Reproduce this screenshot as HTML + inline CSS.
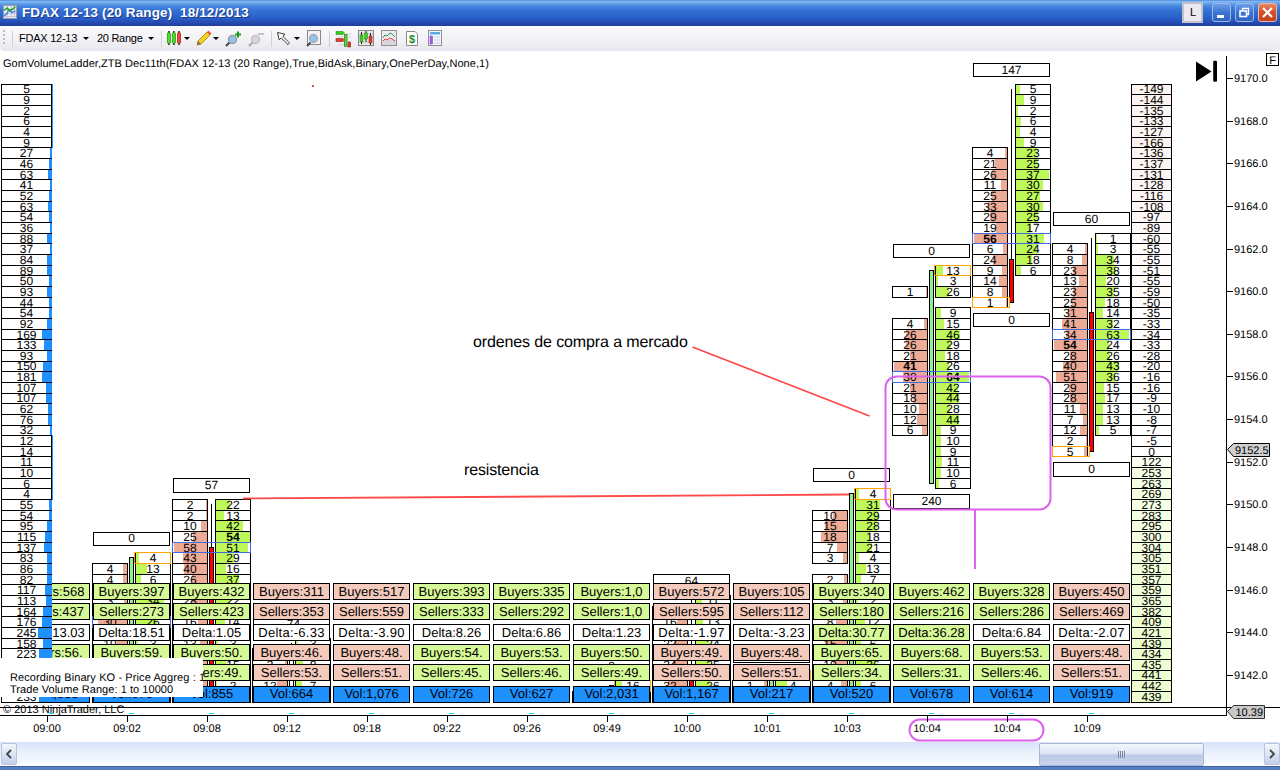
<!DOCTYPE html>
<html><head><meta charset="utf-8"><title>FDAX 12-13 (20 Range) 18/12/2013</title>
<style>
html,body{margin:0;padding:0;background:#fff;overflow:hidden}
body{width:1280px;height:770px;position:relative;font-family:"Liberation Sans", Arial, sans-serif;}
#chart{position:absolute;left:0;top:0}
#title{position:absolute;left:0;top:0;width:1280px;height:26px;
 background:linear-gradient(#3A6FDA 0px,#86BDF0 1px,#6AA8EA 3px,#4687DF 6px,#3270D4 11px,#2B62CA 17px,#2752BC 21px,#2344A6 24px,#213E9C 26px);}
#title .t{position:absolute;left:22px;top:5px;color:#fff;font-weight:bold;font-size:13.5px;letter-spacing:0.12px;white-space:pre;text-shadow:1px 1px 0 #1c3a8a}
#tb{position:absolute;left:0;top:26px;width:1280px;height:25px;background:linear-gradient(#FAFAFC,#F1F1F5 60%,#E6E6EC);border-radius:0 0 4px 4px}
#tb .x{position:absolute;top:6px;font-size:11px;color:#000;white-space:pre}
.arr{position:absolute;width:0;height:0;border-left:3px solid transparent;border-right:3px solid transparent;border-top:3px solid #000}
.sep{position:absolute;top:31px;width:1px;height:16px;background:#D0D0D8}
.wb{position:absolute;top:3px;width:19px;height:19px;border-radius:3px;border:1px solid #9DB9EB;box-sizing:border-box}
#sb{position:absolute;left:0;top:742px;width:1280px;height:24px;background:linear-gradient(#D8E3F9,#ECF1FD 50%,#FBFCFF)}
#bot{position:absolute;left:0;top:766px;width:1280px;height:4px;background:linear-gradient(#2F4F8F,#5B84C4 40%,#4F78BC)}
.sbtn{position:absolute;top:743px;width:16px;height:22px;box-sizing:border-box;border:1px solid #B8C4DC;border-radius:2px;background:linear-gradient(#F3F6FC,#DCE4F4 50%,#C4D0E8)}
#thumb{position:absolute;left:1039px;top:743px;width:165px;height:23px;box-sizing:border-box;border:1px solid #A8B8D8;border-radius:2px;background:linear-gradient(#F4F7FD,#DDE5F5 45%,#BCCAE6 55%,#C9D5EC)}
</style></head><body>
<svg id="chart" width="1280" height="770" viewBox="0 0 1280 770" font-family='"Liberation Sans", Arial, sans-serif' shape-rendering="crispEdges" text-rendering="geometricPrecision">
<rect x="0" y="51" width="1280" height="691" fill="#fff"/>
<rect x="93.5" y="532.5" width="76" height="13" fill="#fff" stroke="#000" stroke-width="1" />
<text x="131.5" y="542.47" font-size="12" text-anchor="middle" fill="#000" >0</text>
<rect x="135" y="552" width="36" height="12" fill="#fff"/>
<rect x="136" y="553" width="3" height="10" fill="#BDF859"/>
<rect x="135.5" y="552.5" width="35" height="11" fill="none" stroke="#000" stroke-width="1" />
<text x="153.0" y="562.27" font-size="12" text-anchor="middle" fill="#000" >4</text>
<rect x="92" y="563" width="36" height="12" fill="#fff"/>
<rect x="123" y="564" width="4" height="10" fill="#EDAB95"/>
<rect x="92.5" y="563.5" width="35" height="11" fill="none" stroke="#000" stroke-width="1" />
<text x="110.0" y="572.92" font-size="12" text-anchor="middle" fill="#000" >4</text>
<rect x="135" y="563" width="36" height="12" fill="#fff"/>
<rect x="136" y="564" width="11" height="10" fill="#BDF859"/>
<rect x="135.5" y="563.5" width="35" height="11" fill="none" stroke="#000" stroke-width="1" />
<text x="153.0" y="572.92" font-size="12" text-anchor="middle" fill="#000" >13</text>
<rect x="92" y="574" width="36" height="11" fill="#fff"/>
<rect x="123" y="575" width="4" height="9" fill="#EDAB95"/>
<rect x="92.5" y="574.5" width="35" height="10" fill="none" stroke="#000" stroke-width="1" />
<text x="110.0" y="583.58" font-size="12" text-anchor="middle" fill="#000" >4</text>
<rect x="135" y="574" width="36" height="11" fill="#fff"/>
<rect x="136" y="575" width="5" height="9" fill="#BDF859"/>
<rect x="135.5" y="574.5" width="35" height="10" fill="none" stroke="#000" stroke-width="1" />
<text x="153.0" y="583.58" font-size="12" text-anchor="middle" fill="#000" >6</text>
<rect x="92" y="584" width="36" height="12" fill="#fff"/>
<rect x="121" y="585" width="6" height="10" fill="#EDAB95"/>
<rect x="92.5" y="584.5" width="35" height="11" fill="none" stroke="#000" stroke-width="1" />
<text x="110.0" y="594.23" font-size="12" text-anchor="middle" fill="#000" >6</text>
<rect x="135" y="584" width="36" height="12" fill="#fff"/>
<rect x="136" y="585" width="17" height="10" fill="#BDF859"/>
<rect x="135.5" y="584.5" width="35" height="11" fill="none" stroke="#000" stroke-width="1" />
<text x="153.0" y="594.23" font-size="12" text-anchor="middle" fill="#000" >21</text>
<rect x="92" y="595" width="36" height="12" fill="#fff"/>
<rect x="124" y="596" width="3" height="10" fill="#EDAB95"/>
<rect x="92.5" y="595.5" width="35" height="11" fill="none" stroke="#000" stroke-width="1" />
<text x="110.0" y="604.89" font-size="12" text-anchor="middle" fill="#000" >3</text>
<rect x="135" y="595" width="36" height="12" fill="#fff"/>
<rect x="136" y="596" width="28" height="10" fill="#BDF859"/>
<rect x="135.5" y="595.5" width="35" height="11" fill="none" stroke="#000" stroke-width="1" />
<text x="153.0" y="604.89" font-size="12" text-anchor="middle" fill="#000" >34</text>
<rect x="92" y="606" width="36" height="11" fill="#fff"/>
<rect x="110" y="607" width="17" height="9" fill="#EDAB95"/>
<rect x="92.5" y="606.5" width="35" height="10" fill="none" stroke="#000" stroke-width="1" />
<text x="110.0" y="615.54" font-size="12" text-anchor="middle" fill="#000" >18</text>
<rect x="135" y="606" width="36" height="11" fill="#fff"/>
<rect x="136" y="607" width="21" height="9" fill="#BDF859"/>
<rect x="135.5" y="606.5" width="35" height="10" fill="none" stroke="#000" stroke-width="1" />
<text x="153.0" y="615.54" font-size="12" text-anchor="middle" fill="#000" >25</text>
<rect x="92" y="616" width="36" height="12" fill="#fff"/>
<rect x="98" y="617" width="29" height="10" fill="#EDAB95"/>
<rect x="92.5" y="616.5" width="35" height="11" fill="none" stroke="#000" stroke-width="1" />
<text x="110.0" y="626.2" font-size="12" text-anchor="middle" fill="#000" >30</text>
<rect x="135" y="616" width="36" height="12" fill="#fff"/>
<rect x="136" y="617" width="21" height="10" fill="#BDF859"/>
<rect x="135.5" y="616.5" width="35" height="11" fill="none" stroke="#000" stroke-width="1" />
<text x="153.0" y="626.2" font-size="12" text-anchor="middle" fill="#000" >26</text>
<rect x="92" y="627" width="36" height="12" fill="#fff"/>
<rect x="107" y="628" width="20" height="10" fill="#EDAB95"/>
<rect x="92.5" y="627.5" width="35" height="11" fill="none" stroke="#000" stroke-width="1" />
<text x="110.0" y="636.85" font-size="12" text-anchor="middle" fill="#000" >21</text>
<rect x="135" y="627" width="36" height="12" fill="#fff"/>
<rect x="136" y="628" width="14" height="10" fill="#BDF859"/>
<rect x="135.5" y="627.5" width="35" height="11" fill="none" stroke="#000" stroke-width="1" />
<text x="153.0" y="636.85" font-size="12" text-anchor="middle" fill="#000" >17</text>
<rect x="92" y="638" width="36" height="11" fill="#fff"/>
<rect x="117" y="639" width="10" height="9" fill="#EDAB95"/>
<rect x="92.5" y="638.5" width="35" height="10" fill="none" stroke="#000" stroke-width="1" />
<text x="110.0" y="647.51" font-size="12" text-anchor="middle" fill="#000" >10</text>
<rect x="135" y="638" width="36" height="11" fill="#fff"/>
<rect x="136" y="639" width="2" height="9" fill="#BDF859"/>
<rect x="135.5" y="638.5" width="35" height="10" fill="none" stroke="#000" stroke-width="1" />
<text x="153.0" y="647.51" font-size="12" text-anchor="middle" fill="#000" >3</text>
<rect x="92" y="648" width="36" height="12" fill="#fff"/>
<rect x="119" y="649" width="8" height="10" fill="#EDAB95"/>
<rect x="92.5" y="648.5" width="35" height="11" fill="none" stroke="#000" stroke-width="1" />
<text x="110.0" y="658.16" font-size="12" text-anchor="middle" fill="#000" >8</text>
<rect x="135" y="648" width="36" height="12" fill="#fff"/>
<rect x="136" y="649" width="10" height="10" fill="#BDF859"/>
<rect x="135.5" y="648.5" width="35" height="11" fill="none" stroke="#000" stroke-width="1" />
<text x="153.0" y="658.16" font-size="12" text-anchor="middle" fill="#000" >12</text>
<rect x="92" y="659" width="36" height="12" fill="#fff"/>
<rect x="113" y="660" width="14" height="10" fill="#EDAB95"/>
<rect x="92.5" y="659.5" width="35" height="11" fill="none" stroke="#000" stroke-width="1" />
<text x="110.0" y="668.82" font-size="12" text-anchor="middle" fill="#000" >14</text>
<rect x="135" y="659" width="36" height="12" fill="#fff"/>
<rect x="136" y="660" width="7" height="10" fill="#BDF859"/>
<rect x="135.5" y="659.5" width="35" height="11" fill="none" stroke="#000" stroke-width="1" />
<text x="153.0" y="668.82" font-size="12" text-anchor="middle" fill="#000" >9</text>
<rect x="92" y="670" width="36" height="11" fill="#fff"/>
<rect x="116" y="671" width="11" height="9" fill="#EDAB95"/>
<rect x="92.5" y="670.5" width="35" height="10" fill="none" stroke="#000" stroke-width="1" />
<text x="110.0" y="679.47" font-size="12" text-anchor="middle" fill="#000" >11</text>
<rect x="135" y="670" width="36" height="11" fill="#fff"/>
<rect x="136" y="671" width="5" height="9" fill="#BDF859"/>
<rect x="135.5" y="670.5" width="35" height="10" fill="none" stroke="#000" stroke-width="1" />
<text x="153.0" y="679.47" font-size="12" text-anchor="middle" fill="#000" >6</text>
<rect x="92" y="680" width="36" height="12" fill="#fff"/>
<rect x="118" y="681" width="9" height="10" fill="#EDAB95"/>
<rect x="92.5" y="680.5" width="35" height="11" fill="none" stroke="#000" stroke-width="1" />
<text x="110.0" y="690.13" font-size="12" text-anchor="middle" fill="#000" >9</text>
<rect x="135" y="680" width="36" height="12" fill="#fff"/>
<rect x="136" y="681" width="2" height="10" fill="#BDF859"/>
<rect x="135.5" y="680.5" width="35" height="11" fill="none" stroke="#000" stroke-width="1" />
<text x="153.0" y="690.13" font-size="12" text-anchor="middle" fill="#000" >2</text>
<rect x="92" y="691" width="36" height="12" fill="#fff"/>
<rect x="122" y="692" width="5" height="10" fill="#EDAB95"/>
<rect x="92.5" y="691.5" width="35" height="11" fill="none" stroke="#000" stroke-width="1" />
<text x="110.0" y="700.78" font-size="12" text-anchor="middle" fill="#000" >5</text>
<rect x="135" y="691" width="36" height="12" fill="#fff"/>
<rect x="136" y="692" width="2" height="10" fill="#BDF859"/>
<rect x="135.5" y="691.5" width="35" height="11" fill="none" stroke="#000" stroke-width="1" />
<text x="153.0" y="700.78" font-size="12" text-anchor="middle" fill="#000" >3</text>
<rect x="129.5" y="557.5" width="4" height="143" fill="#90EE90" stroke="#000" stroke-width="1" />
<rect x="92.5" y="616.5" width="78" height="11" fill="none" stroke="#4169E1" stroke-width="1.4" />
<rect x="134.5" y="552.5" width="36" height="11" fill="none" stroke="#FFA500" stroke-width="1.2" />
<rect x="173.5" y="478.5" width="76" height="14" fill="#fff" stroke="#000" stroke-width="1" />
<text x="211.5" y="489.19" font-size="12" text-anchor="middle" fill="#000" >57</text>
<rect x="211" y="504" width="1" height="43" fill="#000"/>
<rect x="172" y="499" width="36" height="12" fill="#fff"/>
<rect x="206" y="500" width="1" height="10" fill="#EDAB95"/>
<rect x="172.5" y="499.5" width="35" height="11" fill="none" stroke="#000" stroke-width="1" />
<text x="190.0" y="508.99" font-size="12" text-anchor="middle" fill="#000" >2</text>
<rect x="215" y="499" width="36" height="12" fill="#fff"/>
<rect x="216" y="500" width="14" height="10" fill="#BDF859"/>
<rect x="215.5" y="499.5" width="35" height="11" fill="none" stroke="#000" stroke-width="1" />
<text x="233.0" y="508.99" font-size="12" text-anchor="middle" fill="#000" >22</text>
<rect x="172" y="510" width="36" height="11" fill="#fff"/>
<rect x="206" y="511" width="1" height="9" fill="#EDAB95"/>
<rect x="172.5" y="510.5" width="35" height="10" fill="none" stroke="#000" stroke-width="1" />
<text x="190.0" y="519.65" font-size="12" text-anchor="middle" fill="#000" >2</text>
<rect x="215" y="510" width="36" height="11" fill="#fff"/>
<rect x="216" y="511" width="8" height="9" fill="#BDF859"/>
<rect x="215.5" y="510.5" width="35" height="10" fill="none" stroke="#000" stroke-width="1" />
<text x="233.0" y="519.65" font-size="12" text-anchor="middle" fill="#000" >13</text>
<rect x="172" y="520" width="36" height="12" fill="#fff"/>
<rect x="201" y="521" width="6" height="10" fill="#EDAB95"/>
<rect x="172.5" y="520.5" width="35" height="11" fill="none" stroke="#000" stroke-width="1" />
<text x="190.0" y="530.3" font-size="12" text-anchor="middle" fill="#000" >10</text>
<rect x="215" y="520" width="36" height="12" fill="#fff"/>
<rect x="216" y="521" width="27" height="10" fill="#BDF859"/>
<rect x="215.5" y="520.5" width="35" height="11" fill="none" stroke="#000" stroke-width="1" />
<text x="233.0" y="530.3" font-size="12" text-anchor="middle" fill="#000" >42</text>
<rect x="172" y="531" width="36" height="12" fill="#fff"/>
<rect x="193" y="532" width="14" height="10" fill="#EDAB95"/>
<rect x="172.5" y="531.5" width="35" height="11" fill="none" stroke="#000" stroke-width="1" />
<text x="190.0" y="540.96" font-size="12" text-anchor="middle" fill="#000" >25</text>
<rect x="215" y="531" width="36" height="12" fill="#fff"/>
<rect x="216" y="532" width="34" height="10" fill="#BDF859"/>
<rect x="215.5" y="531.5" width="35" height="11" fill="none" stroke="#000" stroke-width="1" />
<text x="233.0" y="540.96" font-size="12" text-anchor="middle" font-weight="bold" fill="#000" >54</text>
<rect x="172" y="542" width="36" height="11" fill="#fff"/>
<rect x="174" y="543" width="33" height="9" fill="#EDAB95"/>
<rect x="172.5" y="542.5" width="35" height="10" fill="none" stroke="#000" stroke-width="1" />
<text x="190.0" y="551.61" font-size="12" text-anchor="middle" fill="#000" >58</text>
<rect x="215" y="542" width="36" height="11" fill="#fff"/>
<rect x="216" y="543" width="32" height="9" fill="#BDF859"/>
<rect x="215.5" y="542.5" width="35" height="10" fill="none" stroke="#000" stroke-width="1" />
<text x="233.0" y="551.61" font-size="12" text-anchor="middle" fill="#000" >51</text>
<rect x="172" y="552" width="36" height="12" fill="#fff"/>
<rect x="183" y="553" width="24" height="10" fill="#EDAB95"/>
<rect x="172.5" y="552.5" width="35" height="11" fill="none" stroke="#000" stroke-width="1" />
<text x="190.0" y="562.27" font-size="12" text-anchor="middle" fill="#000" >43</text>
<rect x="215" y="552" width="36" height="12" fill="#fff"/>
<rect x="216" y="553" width="18" height="10" fill="#BDF859"/>
<rect x="215.5" y="552.5" width="35" height="11" fill="none" stroke="#000" stroke-width="1" />
<text x="233.0" y="562.27" font-size="12" text-anchor="middle" fill="#000" >29</text>
<rect x="172" y="563" width="36" height="12" fill="#fff"/>
<rect x="184" y="564" width="23" height="10" fill="#EDAB95"/>
<rect x="172.5" y="563.5" width="35" height="11" fill="none" stroke="#000" stroke-width="1" />
<text x="190.0" y="572.92" font-size="12" text-anchor="middle" fill="#000" >40</text>
<rect x="215" y="563" width="36" height="12" fill="#fff"/>
<rect x="216" y="564" width="10" height="10" fill="#BDF859"/>
<rect x="215.5" y="563.5" width="35" height="11" fill="none" stroke="#000" stroke-width="1" />
<text x="233.0" y="572.92" font-size="12" text-anchor="middle" fill="#000" >16</text>
<rect x="172" y="574" width="36" height="11" fill="#fff"/>
<rect x="192" y="575" width="15" height="9" fill="#EDAB95"/>
<rect x="172.5" y="574.5" width="35" height="10" fill="none" stroke="#000" stroke-width="1" />
<text x="190.0" y="583.58" font-size="12" text-anchor="middle" fill="#000" >26</text>
<rect x="215" y="574" width="36" height="11" fill="#fff"/>
<rect x="216" y="575" width="23" height="9" fill="#BDF859"/>
<rect x="215.5" y="574.5" width="35" height="10" fill="none" stroke="#000" stroke-width="1" />
<text x="233.0" y="583.58" font-size="12" text-anchor="middle" fill="#000" >37</text>
<rect x="172" y="584" width="36" height="12" fill="#fff"/>
<rect x="188" y="585" width="19" height="10" fill="#EDAB95"/>
<rect x="172.5" y="584.5" width="35" height="11" fill="none" stroke="#000" stroke-width="1" />
<text x="190.0" y="594.23" font-size="12" text-anchor="middle" fill="#000" >33</text>
<rect x="215" y="584" width="36" height="12" fill="#fff"/>
<rect x="216" y="585" width="19" height="10" fill="#BDF859"/>
<rect x="215.5" y="584.5" width="35" height="11" fill="none" stroke="#000" stroke-width="1" />
<text x="233.0" y="594.23" font-size="12" text-anchor="middle" fill="#000" >30</text>
<rect x="172" y="595" width="36" height="12" fill="#fff"/>
<rect x="191" y="596" width="16" height="10" fill="#EDAB95"/>
<rect x="172.5" y="595.5" width="35" height="11" fill="none" stroke="#000" stroke-width="1" />
<text x="190.0" y="604.89" font-size="12" text-anchor="middle" fill="#000" >28</text>
<rect x="215" y="595" width="36" height="12" fill="#fff"/>
<rect x="216" y="596" width="14" height="10" fill="#BDF859"/>
<rect x="215.5" y="595.5" width="35" height="11" fill="none" stroke="#000" stroke-width="1" />
<text x="233.0" y="604.89" font-size="12" text-anchor="middle" fill="#000" >22</text>
<rect x="172" y="606" width="36" height="11" fill="#fff"/>
<rect x="195" y="607" width="12" height="9" fill="#EDAB95"/>
<rect x="172.5" y="606.5" width="35" height="10" fill="none" stroke="#000" stroke-width="1" />
<text x="190.0" y="615.54" font-size="12" text-anchor="middle" fill="#000" >21</text>
<rect x="215" y="606" width="36" height="11" fill="#fff"/>
<rect x="216" y="607" width="11" height="9" fill="#BDF859"/>
<rect x="215.5" y="606.5" width="35" height="10" fill="none" stroke="#000" stroke-width="1" />
<text x="233.0" y="615.54" font-size="12" text-anchor="middle" fill="#000" >18</text>
<rect x="172" y="616" width="36" height="12" fill="#fff"/>
<rect x="198" y="617" width="9" height="10" fill="#EDAB95"/>
<rect x="172.5" y="616.5" width="35" height="11" fill="none" stroke="#000" stroke-width="1" />
<text x="190.0" y="626.2" font-size="12" text-anchor="middle" fill="#000" >16</text>
<rect x="215" y="616" width="36" height="12" fill="#fff"/>
<rect x="216" y="617" width="9" height="10" fill="#BDF859"/>
<rect x="215.5" y="616.5" width="35" height="11" fill="none" stroke="#000" stroke-width="1" />
<text x="233.0" y="626.2" font-size="12" text-anchor="middle" fill="#000" >14</text>
<rect x="172" y="627" width="36" height="12" fill="#fff"/>
<rect x="196" y="628" width="11" height="10" fill="#EDAB95"/>
<rect x="172.5" y="627.5" width="35" height="11" fill="none" stroke="#000" stroke-width="1" />
<text x="190.0" y="636.85" font-size="12" text-anchor="middle" fill="#000" >19</text>
<rect x="215" y="627" width="36" height="12" fill="#fff"/>
<rect x="216" y="628" width="7" height="10" fill="#BDF859"/>
<rect x="215.5" y="627.5" width="35" height="11" fill="none" stroke="#000" stroke-width="1" />
<text x="233.0" y="636.85" font-size="12" text-anchor="middle" fill="#000" >11</text>
<rect x="172" y="638" width="36" height="11" fill="#fff"/>
<rect x="200" y="639" width="7" height="9" fill="#EDAB95"/>
<rect x="172.5" y="638.5" width="35" height="10" fill="none" stroke="#000" stroke-width="1" />
<text x="190.0" y="647.51" font-size="12" text-anchor="middle" fill="#000" >13</text>
<rect x="215" y="638" width="36" height="11" fill="#fff"/>
<rect x="216" y="639" width="2" height="9" fill="#BDF859"/>
<rect x="215.5" y="638.5" width="35" height="10" fill="none" stroke="#000" stroke-width="1" />
<text x="233.0" y="647.51" font-size="12" text-anchor="middle" fill="#000" >3</text>
<rect x="172" y="648" width="36" height="12" fill="#fff"/>
<rect x="194" y="649" width="13" height="10" fill="#EDAB95"/>
<rect x="172.5" y="648.5" width="35" height="11" fill="none" stroke="#000" stroke-width="1" />
<text x="190.0" y="658.16" font-size="12" text-anchor="middle" fill="#000" >22</text>
<rect x="215" y="648" width="36" height="12" fill="#fff"/>
<rect x="216" y="649" width="6" height="10" fill="#BDF859"/>
<rect x="215.5" y="648.5" width="35" height="11" fill="none" stroke="#000" stroke-width="1" />
<text x="233.0" y="658.16" font-size="12" text-anchor="middle" fill="#000" >9</text>
<rect x="172" y="659" width="36" height="12" fill="#fff"/>
<rect x="191" y="660" width="16" height="10" fill="#EDAB95"/>
<rect x="172.5" y="659.5" width="35" height="11" fill="none" stroke="#000" stroke-width="1" />
<text x="190.0" y="668.82" font-size="12" text-anchor="middle" fill="#000" >28</text>
<rect x="215" y="659" width="36" height="12" fill="#fff"/>
<rect x="216" y="660" width="10" height="10" fill="#BDF859"/>
<rect x="215.5" y="659.5" width="35" height="11" fill="none" stroke="#000" stroke-width="1" />
<text x="233.0" y="668.82" font-size="12" text-anchor="middle" fill="#000" >15</text>
<rect x="172" y="670" width="36" height="11" fill="#fff"/>
<rect x="197" y="671" width="10" height="9" fill="#EDAB95"/>
<rect x="172.5" y="670.5" width="35" height="10" fill="none" stroke="#000" stroke-width="1" />
<text x="190.0" y="679.47" font-size="12" text-anchor="middle" fill="#000" >17</text>
<rect x="215" y="670" width="36" height="11" fill="#fff"/>
<rect x="216" y="671" width="5" height="9" fill="#BDF859"/>
<rect x="215.5" y="670.5" width="35" height="10" fill="none" stroke="#000" stroke-width="1" />
<text x="233.0" y="679.47" font-size="12" text-anchor="middle" fill="#000" >8</text>
<rect x="172" y="680" width="36" height="12" fill="#fff"/>
<rect x="189" y="681" width="18" height="10" fill="#EDAB95"/>
<rect x="172.5" y="680.5" width="35" height="11" fill="none" stroke="#000" stroke-width="1" />
<text x="190.0" y="690.13" font-size="12" text-anchor="middle" fill="#000" >31</text>
<rect x="215" y="680" width="36" height="12" fill="#fff"/>
<rect x="216" y="681" width="1" height="10" fill="#BDF859"/>
<rect x="215.5" y="680.5" width="35" height="11" fill="none" stroke="#000" stroke-width="1" />
<text x="233.0" y="690.13" font-size="12" text-anchor="middle" fill="#000" >2</text>
<rect x="172" y="691" width="36" height="12" fill="#fff"/>
<rect x="200" y="692" width="7" height="10" fill="#EDAB95"/>
<rect x="172.5" y="691.5" width="35" height="11" fill="none" stroke="#000" stroke-width="1" />
<text x="190.0" y="700.78" font-size="12" text-anchor="middle" fill="#000" >12</text>
<rect x="215" y="691" width="36" height="12" fill="#fff"/>
<rect x="216" y="692" width="3" height="10" fill="#BDF859"/>
<rect x="215.5" y="691.5" width="35" height="11" fill="none" stroke="#000" stroke-width="1" />
<text x="233.0" y="700.78" font-size="12" text-anchor="middle" fill="#000" >5</text>
<rect x="209.5" y="547.5" width="4" height="153" fill="#FF0000" stroke="#000" stroke-width="1" />
<rect x="172.5" y="542.5" width="78" height="10" fill="none" stroke="#4169E1" stroke-width="1.4" />
<rect x="253.5" y="617.5" width="76" height="13" fill="#fff" stroke="#000" stroke-width="1" />
<text x="291.5" y="627.71" font-size="12" text-anchor="middle" fill="#000" >-74</text>
<rect x="291" y="643" width="1" height="10" fill="#000"/>
<rect x="295" y="638" width="36" height="11" fill="#fff"/>
<rect x="296" y="639" width="2" height="9" fill="#BDF859"/>
<rect x="295.5" y="638.5" width="35" height="10" fill="none" stroke="#000" stroke-width="1" />
<text x="313.0" y="647.51" font-size="12" text-anchor="middle" fill="#000" >3</text>
<rect x="252" y="648" width="36" height="12" fill="#fff"/>
<rect x="285" y="649" width="2" height="10" fill="#EDAB95"/>
<rect x="252.5" y="648.5" width="35" height="11" fill="none" stroke="#000" stroke-width="1" />
<text x="270.0" y="658.16" font-size="12" text-anchor="middle" fill="#000" >2</text>
<rect x="295" y="648" width="36" height="12" fill="#fff"/>
<rect x="296" y="649" width="4" height="10" fill="#BDF859"/>
<rect x="295.5" y="648.5" width="35" height="11" fill="none" stroke="#000" stroke-width="1" />
<text x="313.0" y="658.16" font-size="12" text-anchor="middle" fill="#000" >5</text>
<rect x="252" y="659" width="36" height="12" fill="#fff"/>
<rect x="285" y="660" width="2" height="10" fill="#EDAB95"/>
<rect x="252.5" y="659.5" width="35" height="11" fill="none" stroke="#000" stroke-width="1" />
<text x="270.0" y="668.82" font-size="12" text-anchor="middle" fill="#000" >3</text>
<rect x="295" y="659" width="36" height="12" fill="#fff"/>
<rect x="296" y="660" width="7" height="10" fill="#BDF859"/>
<rect x="295.5" y="659.5" width="35" height="11" fill="none" stroke="#000" stroke-width="1" />
<text x="313.0" y="668.82" font-size="12" text-anchor="middle" fill="#000" >8</text>
<rect x="252" y="670" width="36" height="11" fill="#fff"/>
<rect x="280" y="671" width="7" height="9" fill="#EDAB95"/>
<rect x="252.5" y="670.5" width="35" height="10" fill="none" stroke="#000" stroke-width="1" />
<text x="270.0" y="679.47" font-size="12" text-anchor="middle" fill="#000" >9</text>
<rect x="295" y="670" width="36" height="11" fill="#fff"/>
<rect x="296" y="671" width="9" height="9" fill="#BDF859"/>
<rect x="295.5" y="670.5" width="35" height="10" fill="none" stroke="#000" stroke-width="1" />
<text x="313.0" y="679.47" font-size="12" text-anchor="middle" fill="#000" >11</text>
<rect x="252" y="680" width="36" height="12" fill="#fff"/>
<rect x="277" y="681" width="10" height="10" fill="#EDAB95"/>
<rect x="252.5" y="680.5" width="35" height="11" fill="none" stroke="#000" stroke-width="1" />
<text x="270.0" y="690.13" font-size="12" text-anchor="middle" fill="#000" >12</text>
<rect x="295" y="680" width="36" height="12" fill="#fff"/>
<rect x="296" y="681" width="6" height="10" fill="#BDF859"/>
<rect x="295.5" y="680.5" width="35" height="11" fill="none" stroke="#000" stroke-width="1" />
<text x="313.0" y="690.13" font-size="12" text-anchor="middle" fill="#000" >7</text>
<rect x="252" y="691" width="36" height="12" fill="#fff"/>
<rect x="275" y="692" width="12" height="10" fill="#EDAB95"/>
<rect x="252.5" y="691.5" width="35" height="11" fill="none" stroke="#000" stroke-width="1" />
<text x="270.0" y="700.78" font-size="12" text-anchor="middle" fill="#000" >15</text>
<rect x="295" y="691" width="36" height="12" fill="#fff"/>
<rect x="296" y="692" width="7" height="10" fill="#BDF859"/>
<rect x="295.5" y="691.5" width="35" height="11" fill="none" stroke="#000" stroke-width="1" />
<text x="313.0" y="700.78" font-size="12" text-anchor="middle" fill="#000" >9</text>
<rect x="289.5" y="653.5" width="4" height="47" fill="#FFFFFF" stroke="#000" stroke-width="1" />
<rect x="573.5" y="660.5" width="76" height="13" fill="#fff" stroke="#000" stroke-width="1" />
<text x="611.5" y="670.33" font-size="12" text-anchor="middle" fill="#000" >0</text>
<rect x="615" y="680" width="36" height="12" fill="#fff"/>
<rect x="616" y="681" width="6" height="10" fill="#BDF859"/>
<rect x="615.5" y="680.5" width="35" height="11" fill="none" stroke="#000" stroke-width="1" />
<text x="633.0" y="690.13" font-size="12" text-anchor="middle" fill="#000" >16</text>
<rect x="572" y="691" width="36" height="12" fill="#fff"/>
<rect x="605" y="692" width="2" height="10" fill="#EDAB95"/>
<rect x="572.5" y="691.5" width="35" height="11" fill="none" stroke="#000" stroke-width="1" />
<text x="590.0" y="700.78" font-size="12" text-anchor="middle" fill="#000" >3</text>
<rect x="615" y="691" width="36" height="12" fill="#fff"/>
<rect x="616" y="692" width="8" height="10" fill="#BDF859"/>
<rect x="615.5" y="691.5" width="35" height="11" fill="none" stroke="#000" stroke-width="1" />
<text x="633.0" y="700.78" font-size="12" text-anchor="middle" fill="#000" >22</text>
<rect x="609.5" y="685.5" width="4" height="15" fill="#90EE90" stroke="#000" stroke-width="1" />
<rect x="614.5" y="680.5" width="36" height="11" fill="none" stroke="#FFA500" stroke-width="1.2" />
<rect x="653.5" y="574.5" width="76" height="14" fill="#fff" stroke="#000" stroke-width="1" />
<text x="691.5" y="585.09" font-size="12" text-anchor="middle" fill="#000" >64</text>
<rect x="691" y="600" width="1" height="75" fill="#000"/>
<rect x="695" y="595" width="36" height="12" fill="#fff"/>
<rect x="696" y="596" width="6" height="10" fill="#BDF859"/>
<rect x="695.5" y="595.5" width="35" height="11" fill="none" stroke="#000" stroke-width="1" />
<text x="713.0" y="604.89" font-size="12" text-anchor="middle" fill="#000" >11</text>
<rect x="652" y="606" width="36" height="11" fill="#fff"/>
<rect x="684" y="607" width="3" height="9" fill="#EDAB95"/>
<rect x="652.5" y="606.5" width="35" height="10" fill="none" stroke="#000" stroke-width="1" />
<text x="670.0" y="615.54" font-size="12" text-anchor="middle" fill="#000" >5</text>
<rect x="695" y="606" width="36" height="11" fill="#fff"/>
<rect x="696" y="607" width="5" height="9" fill="#BDF859"/>
<rect x="695.5" y="606.5" width="35" height="10" fill="none" stroke="#000" stroke-width="1" />
<text x="713.0" y="615.54" font-size="12" text-anchor="middle" fill="#000" >9</text>
<rect x="652" y="616" width="36" height="12" fill="#fff"/>
<rect x="677" y="617" width="10" height="10" fill="#EDAB95"/>
<rect x="652.5" y="616.5" width="35" height="11" fill="none" stroke="#000" stroke-width="1" />
<text x="670.0" y="626.2" font-size="12" text-anchor="middle" fill="#000" >16</text>
<rect x="695" y="616" width="36" height="12" fill="#fff"/>
<rect x="696" y="617" width="7" height="10" fill="#BDF859"/>
<rect x="695.5" y="616.5" width="35" height="11" fill="none" stroke="#000" stroke-width="1" />
<text x="713.0" y="626.2" font-size="12" text-anchor="middle" fill="#000" >13</text>
<rect x="652" y="627" width="36" height="12" fill="#fff"/>
<rect x="676" y="628" width="11" height="10" fill="#EDAB95"/>
<rect x="652.5" y="627.5" width="35" height="11" fill="none" stroke="#000" stroke-width="1" />
<text x="670.0" y="636.85" font-size="12" text-anchor="middle" fill="#000" >19</text>
<rect x="695" y="627" width="36" height="12" fill="#fff"/>
<rect x="696" y="628" width="9" height="10" fill="#BDF859"/>
<rect x="695.5" y="627.5" width="35" height="11" fill="none" stroke="#000" stroke-width="1" />
<text x="713.0" y="636.85" font-size="12" text-anchor="middle" fill="#000" >17</text>
<rect x="652" y="638" width="36" height="11" fill="#fff"/>
<rect x="674" y="639" width="13" height="9" fill="#EDAB95"/>
<rect x="652.5" y="638.5" width="35" height="10" fill="none" stroke="#000" stroke-width="1" />
<text x="670.0" y="647.51" font-size="12" text-anchor="middle" fill="#000" >22</text>
<rect x="695" y="638" width="36" height="11" fill="#fff"/>
<rect x="696" y="639" width="13" height="9" fill="#BDF859"/>
<rect x="695.5" y="638.5" width="35" height="10" fill="none" stroke="#000" stroke-width="1" />
<text x="713.0" y="647.51" font-size="12" text-anchor="middle" fill="#000" >24</text>
<rect x="652" y="648" width="36" height="12" fill="#fff"/>
<rect x="672" y="649" width="15" height="10" fill="#EDAB95"/>
<rect x="652.5" y="648.5" width="35" height="11" fill="none" stroke="#000" stroke-width="1" />
<text x="670.0" y="658.16" font-size="12" text-anchor="middle" fill="#000" >25</text>
<rect x="695" y="648" width="36" height="12" fill="#fff"/>
<rect x="696" y="649" width="12" height="10" fill="#BDF859"/>
<rect x="695.5" y="648.5" width="35" height="11" fill="none" stroke="#000" stroke-width="1" />
<text x="713.0" y="658.16" font-size="12" text-anchor="middle" fill="#000" >21</text>
<rect x="652" y="659" width="36" height="12" fill="#fff"/>
<rect x="673" y="660" width="14" height="10" fill="#EDAB95"/>
<rect x="652.5" y="659.5" width="35" height="11" fill="none" stroke="#000" stroke-width="1" />
<text x="670.0" y="668.82" font-size="12" text-anchor="middle" fill="#000" >24</text>
<rect x="695" y="659" width="36" height="12" fill="#fff"/>
<rect x="696" y="660" width="14" height="10" fill="#BDF859"/>
<rect x="695.5" y="659.5" width="35" height="11" fill="none" stroke="#000" stroke-width="1" />
<text x="713.0" y="668.82" font-size="12" text-anchor="middle" fill="#000" >25</text>
<rect x="652" y="670" width="36" height="11" fill="#fff"/>
<rect x="670" y="671" width="17" height="9" fill="#EDAB95"/>
<rect x="652.5" y="670.5" width="35" height="10" fill="none" stroke="#000" stroke-width="1" />
<text x="670.0" y="679.47" font-size="12" text-anchor="middle" fill="#000" >28</text>
<rect x="695" y="670" width="36" height="11" fill="#fff"/>
<rect x="696" y="671" width="13" height="9" fill="#BDF859"/>
<rect x="695.5" y="670.5" width="35" height="10" fill="none" stroke="#000" stroke-width="1" />
<text x="713.0" y="679.47" font-size="12" text-anchor="middle" fill="#000" >23</text>
<rect x="652" y="680" width="36" height="12" fill="#fff"/>
<rect x="668" y="681" width="19" height="10" fill="#EDAB95"/>
<rect x="652.5" y="680.5" width="35" height="11" fill="none" stroke="#000" stroke-width="1" />
<text x="670.0" y="690.13" font-size="12" text-anchor="middle" fill="#000" >32</text>
<rect x="695" y="680" width="36" height="12" fill="#fff"/>
<rect x="696" y="681" width="14" height="10" fill="#BDF859"/>
<rect x="695.5" y="680.5" width="35" height="11" fill="none" stroke="#000" stroke-width="1" />
<text x="713.0" y="690.13" font-size="12" text-anchor="middle" fill="#000" >26</text>
<rect x="652" y="691" width="36" height="12" fill="#fff"/>
<rect x="669" y="692" width="18" height="10" fill="#EDAB95"/>
<rect x="652.5" y="691.5" width="35" height="11" fill="none" stroke="#000" stroke-width="1" />
<text x="670.0" y="700.78" font-size="12" text-anchor="middle" fill="#000" >30</text>
<rect x="695" y="691" width="36" height="12" fill="#fff"/>
<rect x="696" y="692" width="12" height="10" fill="#BDF859"/>
<rect x="695.5" y="691.5" width="35" height="11" fill="none" stroke="#000" stroke-width="1" />
<text x="713.0" y="700.78" font-size="12" text-anchor="middle" fill="#000" >22</text>
<rect x="689.5" y="675.5" width="4" height="25" fill="#FF0000" stroke="#000" stroke-width="1" />
<rect x="733.5" y="649.5" width="76" height="13" fill="#fff" stroke="#000" stroke-width="1" />
<text x="771.5" y="659.67" font-size="12" text-anchor="middle" fill="#000" >0</text>
<rect x="775" y="670" width="36" height="11" fill="#fff"/>
<rect x="776" y="671" width="6" height="9" fill="#BDF859"/>
<rect x="775.5" y="670.5" width="35" height="10" fill="none" stroke="#000" stroke-width="1" />
<text x="793.0" y="679.47" font-size="12" text-anchor="middle" fill="#000" >2</text>
<rect x="732" y="680" width="36" height="12" fill="#fff"/>
<rect x="764" y="681" width="3" height="10" fill="#EDAB95"/>
<rect x="732.5" y="680.5" width="35" height="11" fill="none" stroke="#000" stroke-width="1" />
<text x="750.0" y="690.13" font-size="12" text-anchor="middle" fill="#000" >1</text>
<rect x="775" y="680" width="36" height="12" fill="#fff"/>
<rect x="776" y="681" width="11" height="10" fill="#BDF859"/>
<rect x="775.5" y="680.5" width="35" height="11" fill="none" stroke="#000" stroke-width="1" />
<text x="793.0" y="690.13" font-size="12" text-anchor="middle" fill="#000" >4</text>
<rect x="732" y="691" width="36" height="12" fill="#fff"/>
<rect x="759" y="692" width="8" height="10" fill="#EDAB95"/>
<rect x="732.5" y="691.5" width="35" height="11" fill="none" stroke="#000" stroke-width="1" />
<text x="750.0" y="700.78" font-size="12" text-anchor="middle" fill="#000" >3</text>
<rect x="775" y="691" width="36" height="12" fill="#fff"/>
<rect x="776" y="692" width="16" height="10" fill="#BDF859"/>
<rect x="775.5" y="691.5" width="35" height="11" fill="none" stroke="#000" stroke-width="1" />
<text x="793.0" y="700.78" font-size="12" text-anchor="middle" fill="#000" >6</text>
<rect x="769.5" y="675.5" width="4" height="25" fill="#90EE90" stroke="#000" stroke-width="1" />
<rect x="774.5" y="670.5" width="36" height="10" fill="none" stroke="#FFA500" stroke-width="1.2" />
<rect x="813.5" y="468.5" width="76" height="13" fill="#fff" stroke="#000" stroke-width="1" />
<text x="851.5" y="478.54" font-size="12" text-anchor="middle" fill="#000" >0</text>
<rect x="855" y="488" width="36" height="12" fill="#fff"/>
<rect x="856" y="489" width="3" height="10" fill="#BDF859"/>
<rect x="855.5" y="488.5" width="35" height="11" fill="none" stroke="#000" stroke-width="1" />
<text x="873.0" y="498.34" font-size="12" text-anchor="middle" fill="#000" >4</text>
<rect x="855" y="499" width="36" height="12" fill="#fff"/>
<rect x="856" y="500" width="24" height="10" fill="#BDF859"/>
<rect x="855.5" y="499.5" width="35" height="11" fill="none" stroke="#000" stroke-width="1" />
<text x="873.0" y="508.99" font-size="12" text-anchor="middle" fill="#000" >31</text>
<rect x="812" y="510" width="36" height="11" fill="#fff"/>
<rect x="833" y="511" width="14" height="9" fill="#EDAB95"/>
<rect x="812.5" y="510.5" width="35" height="10" fill="none" stroke="#000" stroke-width="1" />
<text x="830.0" y="519.65" font-size="12" text-anchor="middle" fill="#000" >10</text>
<rect x="855" y="510" width="36" height="11" fill="#fff"/>
<rect x="856" y="511" width="22" height="9" fill="#BDF859"/>
<rect x="855.5" y="510.5" width="35" height="10" fill="none" stroke="#000" stroke-width="1" />
<text x="873.0" y="519.65" font-size="12" text-anchor="middle" fill="#000" >29</text>
<rect x="812" y="520" width="36" height="12" fill="#fff"/>
<rect x="825" y="521" width="22" height="10" fill="#EDAB95"/>
<rect x="812.5" y="520.5" width="35" height="11" fill="none" stroke="#000" stroke-width="1" />
<text x="830.0" y="530.3" font-size="12" text-anchor="middle" fill="#000" >15</text>
<rect x="855" y="520" width="36" height="12" fill="#fff"/>
<rect x="856" y="521" width="21" height="10" fill="#BDF859"/>
<rect x="855.5" y="520.5" width="35" height="11" fill="none" stroke="#000" stroke-width="1" />
<text x="873.0" y="530.3" font-size="12" text-anchor="middle" fill="#000" >28</text>
<rect x="812" y="531" width="36" height="12" fill="#fff"/>
<rect x="821" y="532" width="26" height="10" fill="#EDAB95"/>
<rect x="812.5" y="531.5" width="35" height="11" fill="none" stroke="#000" stroke-width="1" />
<text x="830.0" y="540.96" font-size="12" text-anchor="middle" fill="#000" >18</text>
<rect x="855" y="531" width="36" height="12" fill="#fff"/>
<rect x="856" y="532" width="14" height="10" fill="#BDF859"/>
<rect x="855.5" y="531.5" width="35" height="11" fill="none" stroke="#000" stroke-width="1" />
<text x="873.0" y="540.96" font-size="12" text-anchor="middle" fill="#000" >18</text>
<rect x="812" y="542" width="36" height="11" fill="#fff"/>
<rect x="837" y="543" width="10" height="9" fill="#EDAB95"/>
<rect x="812.5" y="542.5" width="35" height="10" fill="none" stroke="#000" stroke-width="1" />
<text x="830.0" y="551.61" font-size="12" text-anchor="middle" fill="#000" >7</text>
<rect x="855" y="542" width="36" height="11" fill="#fff"/>
<rect x="856" y="543" width="16" height="9" fill="#BDF859"/>
<rect x="855.5" y="542.5" width="35" height="10" fill="none" stroke="#000" stroke-width="1" />
<text x="873.0" y="551.61" font-size="12" text-anchor="middle" fill="#000" >21</text>
<rect x="812" y="552" width="36" height="12" fill="#fff"/>
<rect x="843" y="553" width="4" height="10" fill="#EDAB95"/>
<rect x="812.5" y="552.5" width="35" height="11" fill="none" stroke="#000" stroke-width="1" />
<text x="830.0" y="562.27" font-size="12" text-anchor="middle" fill="#000" >3</text>
<rect x="855" y="552" width="36" height="12" fill="#fff"/>
<rect x="856" y="553" width="3" height="10" fill="#BDF859"/>
<rect x="855.5" y="552.5" width="35" height="11" fill="none" stroke="#000" stroke-width="1" />
<text x="873.0" y="562.27" font-size="12" text-anchor="middle" fill="#000" >4</text>
<rect x="855" y="563" width="36" height="12" fill="#fff"/>
<rect x="856" y="564" width="10" height="10" fill="#BDF859"/>
<rect x="855.5" y="563.5" width="35" height="11" fill="none" stroke="#000" stroke-width="1" />
<text x="873.0" y="572.92" font-size="12" text-anchor="middle" fill="#000" >13</text>
<rect x="812" y="574" width="36" height="11" fill="#fff"/>
<rect x="844" y="575" width="3" height="9" fill="#EDAB95"/>
<rect x="812.5" y="574.5" width="35" height="10" fill="none" stroke="#000" stroke-width="1" />
<text x="830.0" y="583.58" font-size="12" text-anchor="middle" fill="#000" >2</text>
<rect x="855" y="574" width="36" height="11" fill="#fff"/>
<rect x="856" y="575" width="5" height="9" fill="#BDF859"/>
<rect x="855.5" y="574.5" width="35" height="10" fill="none" stroke="#000" stroke-width="1" />
<text x="873.0" y="583.58" font-size="12" text-anchor="middle" fill="#000" >7</text>
<rect x="812" y="584" width="36" height="12" fill="#fff"/>
<rect x="840" y="585" width="7" height="10" fill="#EDAB95"/>
<rect x="812.5" y="584.5" width="35" height="11" fill="none" stroke="#000" stroke-width="1" />
<text x="830.0" y="594.23" font-size="12" text-anchor="middle" fill="#000" >5</text>
<rect x="855" y="584" width="36" height="12" fill="#fff"/>
<rect x="856" y="585" width="7" height="10" fill="#BDF859"/>
<rect x="855.5" y="584.5" width="35" height="11" fill="none" stroke="#000" stroke-width="1" />
<text x="873.0" y="594.23" font-size="12" text-anchor="middle" fill="#000" >9</text>
<rect x="812" y="595" width="36" height="12" fill="#fff"/>
<rect x="843" y="596" width="4" height="10" fill="#EDAB95"/>
<rect x="812.5" y="595.5" width="35" height="11" fill="none" stroke="#000" stroke-width="1" />
<text x="830.0" y="604.89" font-size="12" text-anchor="middle" fill="#000" >3</text>
<rect x="855" y="595" width="36" height="12" fill="#fff"/>
<rect x="856" y="596" width="2" height="10" fill="#BDF859"/>
<rect x="855.5" y="595.5" width="35" height="11" fill="none" stroke="#000" stroke-width="1" />
<text x="873.0" y="604.89" font-size="12" text-anchor="middle" fill="#000" >2</text>
<rect x="812" y="606" width="36" height="11" fill="#fff"/>
<rect x="838" y="607" width="9" height="9" fill="#EDAB95"/>
<rect x="812.5" y="606.5" width="35" height="10" fill="none" stroke="#000" stroke-width="1" />
<text x="830.0" y="615.54" font-size="12" text-anchor="middle" fill="#000" >6</text>
<rect x="855" y="606" width="36" height="11" fill="#fff"/>
<rect x="856" y="607" width="8" height="9" fill="#BDF859"/>
<rect x="855.5" y="606.5" width="35" height="10" fill="none" stroke="#000" stroke-width="1" />
<text x="873.0" y="615.54" font-size="12" text-anchor="middle" fill="#000" >10</text>
<rect x="812" y="616" width="36" height="12" fill="#fff"/>
<rect x="836" y="617" width="11" height="10" fill="#EDAB95"/>
<rect x="812.5" y="616.5" width="35" height="11" fill="none" stroke="#000" stroke-width="1" />
<text x="830.0" y="626.2" font-size="12" text-anchor="middle" fill="#000" >8</text>
<rect x="855" y="616" width="36" height="12" fill="#fff"/>
<rect x="856" y="617" width="9" height="10" fill="#BDF859"/>
<rect x="855.5" y="616.5" width="35" height="11" fill="none" stroke="#000" stroke-width="1" />
<text x="873.0" y="626.2" font-size="12" text-anchor="middle" fill="#000" >12</text>
<rect x="812" y="627" width="36" height="12" fill="#fff"/>
<rect x="831" y="628" width="16" height="10" fill="#EDAB95"/>
<rect x="812.5" y="627.5" width="35" height="11" fill="none" stroke="#000" stroke-width="1" />
<text x="830.0" y="636.85" font-size="12" text-anchor="middle" fill="#000" >11</text>
<rect x="855" y="627" width="36" height="12" fill="#fff"/>
<rect x="856" y="628" width="7" height="10" fill="#BDF859"/>
<rect x="855.5" y="627.5" width="35" height="11" fill="none" stroke="#000" stroke-width="1" />
<text x="873.0" y="636.85" font-size="12" text-anchor="middle" fill="#000" >9</text>
<rect x="812" y="638" width="36" height="11" fill="#fff"/>
<rect x="825" y="639" width="22" height="9" fill="#EDAB95"/>
<rect x="812.5" y="638.5" width="35" height="10" fill="none" stroke="#000" stroke-width="1" />
<text x="830.0" y="647.51" font-size="12" text-anchor="middle" fill="#000" >15</text>
<rect x="855" y="638" width="36" height="11" fill="#fff"/>
<rect x="856" y="639" width="5" height="9" fill="#BDF859"/>
<rect x="855.5" y="638.5" width="35" height="10" fill="none" stroke="#000" stroke-width="1" />
<text x="873.0" y="647.51" font-size="12" text-anchor="middle" fill="#000" >6</text>
<rect x="812" y="648" width="36" height="12" fill="#fff"/>
<rect x="830" y="649" width="17" height="10" fill="#EDAB95"/>
<rect x="812.5" y="648.5" width="35" height="11" fill="none" stroke="#000" stroke-width="1" />
<text x="830.0" y="658.16" font-size="12" text-anchor="middle" fill="#000" >12</text>
<rect x="855" y="648" width="36" height="12" fill="#fff"/>
<rect x="856" y="649" width="11" height="10" fill="#BDF859"/>
<rect x="855.5" y="648.5" width="35" height="11" fill="none" stroke="#000" stroke-width="1" />
<text x="873.0" y="658.16" font-size="12" text-anchor="middle" fill="#000" >14</text>
<rect x="812" y="659" width="36" height="12" fill="#fff"/>
<rect x="833" y="660" width="14" height="10" fill="#EDAB95"/>
<rect x="812.5" y="659.5" width="35" height="11" fill="none" stroke="#000" stroke-width="1" />
<text x="830.0" y="668.82" font-size="12" text-anchor="middle" fill="#000" >10</text>
<rect x="855" y="659" width="36" height="12" fill="#fff"/>
<rect x="856" y="660" width="20" height="10" fill="#BDF859"/>
<rect x="855.5" y="659.5" width="35" height="11" fill="none" stroke="#000" stroke-width="1" />
<text x="873.0" y="668.82" font-size="12" text-anchor="middle" fill="#000" >26</text>
<rect x="812" y="670" width="36" height="11" fill="#fff"/>
<rect x="837" y="671" width="10" height="9" fill="#EDAB95"/>
<rect x="812.5" y="670.5" width="35" height="10" fill="none" stroke="#000" stroke-width="1" />
<text x="830.0" y="679.47" font-size="12" text-anchor="middle" fill="#000" >7</text>
<rect x="855" y="670" width="36" height="11" fill="#fff"/>
<rect x="856" y="671" width="9" height="9" fill="#BDF859"/>
<rect x="855.5" y="670.5" width="35" height="10" fill="none" stroke="#000" stroke-width="1" />
<text x="873.0" y="679.47" font-size="12" text-anchor="middle" fill="#000" >12</text>
<rect x="812" y="680" width="36" height="12" fill="#fff"/>
<rect x="841" y="681" width="6" height="10" fill="#EDAB95"/>
<rect x="812.5" y="680.5" width="35" height="11" fill="none" stroke="#000" stroke-width="1" />
<text x="830.0" y="690.13" font-size="12" text-anchor="middle" fill="#000" >4</text>
<rect x="855" y="680" width="36" height="12" fill="#fff"/>
<rect x="856" y="681" width="5" height="10" fill="#BDF859"/>
<rect x="855.5" y="680.5" width="35" height="11" fill="none" stroke="#000" stroke-width="1" />
<text x="873.0" y="690.13" font-size="12" text-anchor="middle" fill="#000" >6</text>
<rect x="812" y="691" width="36" height="12" fill="#fff"/>
<rect x="844" y="692" width="3" height="10" fill="#EDAB95"/>
<rect x="812.5" y="691.5" width="35" height="11" fill="none" stroke="#000" stroke-width="1" />
<text x="830.0" y="700.78" font-size="12" text-anchor="middle" fill="#000" >2</text>
<rect x="855" y="691" width="36" height="12" fill="#fff"/>
<rect x="856" y="692" width="2" height="10" fill="#BDF859"/>
<rect x="855.5" y="691.5" width="35" height="11" fill="none" stroke="#000" stroke-width="1" />
<text x="873.0" y="700.78" font-size="12" text-anchor="middle" fill="#000" >3</text>
<rect x="849.5" y="493.5" width="4" height="207" fill="#90EE90" stroke="#000" stroke-width="1" />
<rect x="854.5" y="488.5" width="36" height="11" fill="none" stroke="#FFA500" stroke-width="1.2" />
<rect x="893.5" y="244.5" width="76" height="13" fill="#fff" stroke="#000" stroke-width="1" />
<text x="931.5" y="254.78" font-size="12" text-anchor="middle" fill="#000" >0</text>
<rect x="935" y="265" width="36" height="11" fill="#fff"/>
<rect x="936" y="266" width="7" height="9" fill="#BDF859"/>
<rect x="935.5" y="265.5" width="35" height="10" fill="none" stroke="#000" stroke-width="1" />
<text x="953.0" y="274.58" font-size="12" text-anchor="middle" fill="#000" >13</text>
<rect x="935" y="275" width="36" height="12" fill="#fff"/>
<rect x="936" y="276" width="2" height="10" fill="#BDF859"/>
<rect x="935.5" y="275.5" width="35" height="11" fill="none" stroke="#000" stroke-width="1" />
<text x="953.0" y="285.24" font-size="12" text-anchor="middle" fill="#000" >3</text>
<rect x="892" y="286" width="36" height="12" fill="#fff"/>
<rect x="926" y="287" width="1" height="10" fill="#EDAB95"/>
<rect x="892.5" y="286.5" width="35" height="11" fill="none" stroke="#000" stroke-width="1" />
<text x="910.0" y="295.89" font-size="12" text-anchor="middle" fill="#000" >1</text>
<rect x="935" y="286" width="36" height="12" fill="#fff"/>
<rect x="936" y="287" width="13" height="10" fill="#BDF859"/>
<rect x="935.5" y="286.5" width="35" height="11" fill="none" stroke="#000" stroke-width="1" />
<text x="953.0" y="295.89" font-size="12" text-anchor="middle" fill="#000" >26</text>
<rect x="935" y="307" width="36" height="12" fill="#fff"/>
<rect x="936" y="308" width="5" height="10" fill="#BDF859"/>
<rect x="935.5" y="307.5" width="35" height="11" fill="none" stroke="#000" stroke-width="1" />
<text x="953.0" y="317.2" font-size="12" text-anchor="middle" fill="#000" >9</text>
<rect x="892" y="318" width="36" height="12" fill="#fff"/>
<rect x="924" y="319" width="3" height="10" fill="#EDAB95"/>
<rect x="892.5" y="318.5" width="35" height="11" fill="none" stroke="#000" stroke-width="1" />
<text x="910.0" y="327.86" font-size="12" text-anchor="middle" fill="#000" >4</text>
<rect x="935" y="318" width="36" height="12" fill="#fff"/>
<rect x="936" y="319" width="8" height="10" fill="#BDF859"/>
<rect x="935.5" y="318.5" width="35" height="11" fill="none" stroke="#000" stroke-width="1" />
<text x="953.0" y="327.86" font-size="12" text-anchor="middle" fill="#000" >15</text>
<rect x="892" y="329" width="36" height="11" fill="#fff"/>
<rect x="906" y="330" width="21" height="9" fill="#EDAB95"/>
<rect x="892.5" y="329.5" width="35" height="10" fill="none" stroke="#000" stroke-width="1" />
<text x="910.0" y="338.51" font-size="12" text-anchor="middle" fill="#000" >26</text>
<rect x="935" y="329" width="36" height="11" fill="#fff"/>
<rect x="936" y="330" width="24" height="9" fill="#BDF859"/>
<rect x="935.5" y="329.5" width="35" height="10" fill="none" stroke="#000" stroke-width="1" />
<text x="953.0" y="338.51" font-size="12" text-anchor="middle" fill="#000" >46</text>
<rect x="892" y="339" width="36" height="12" fill="#fff"/>
<rect x="906" y="340" width="21" height="10" fill="#EDAB95"/>
<rect x="892.5" y="339.5" width="35" height="11" fill="none" stroke="#000" stroke-width="1" />
<text x="910.0" y="349.17" font-size="12" text-anchor="middle" fill="#000" >26</text>
<rect x="935" y="339" width="36" height="12" fill="#fff"/>
<rect x="936" y="340" width="15" height="10" fill="#BDF859"/>
<rect x="935.5" y="339.5" width="35" height="11" fill="none" stroke="#000" stroke-width="1" />
<text x="953.0" y="349.17" font-size="12" text-anchor="middle" fill="#000" >29</text>
<rect x="892" y="350" width="36" height="12" fill="#fff"/>
<rect x="910" y="351" width="17" height="10" fill="#EDAB95"/>
<rect x="892.5" y="350.5" width="35" height="11" fill="none" stroke="#000" stroke-width="1" />
<text x="910.0" y="359.82" font-size="12" text-anchor="middle" fill="#000" >21</text>
<rect x="935" y="350" width="36" height="12" fill="#fff"/>
<rect x="936" y="351" width="9" height="10" fill="#BDF859"/>
<rect x="935.5" y="350.5" width="35" height="11" fill="none" stroke="#000" stroke-width="1" />
<text x="953.0" y="359.82" font-size="12" text-anchor="middle" fill="#000" >18</text>
<rect x="892" y="361" width="36" height="11" fill="#fff"/>
<rect x="894" y="362" width="33" height="9" fill="#EDAB95"/>
<rect x="892.5" y="361.5" width="35" height="10" fill="none" stroke="#000" stroke-width="1" />
<text x="910.0" y="370.48" font-size="12" text-anchor="middle" font-weight="bold" fill="#000" >41</text>
<rect x="935" y="361" width="36" height="11" fill="#fff"/>
<rect x="936" y="362" width="13" height="9" fill="#BDF859"/>
<rect x="935.5" y="361.5" width="35" height="10" fill="none" stroke="#000" stroke-width="1" />
<text x="953.0" y="370.48" font-size="12" text-anchor="middle" fill="#000" >26</text>
<rect x="892" y="371" width="36" height="12" fill="#fff"/>
<rect x="903" y="372" width="24" height="10" fill="#EDAB95"/>
<rect x="892.5" y="371.5" width="35" height="11" fill="none" stroke="#000" stroke-width="1" />
<text x="910.0" y="381.13" font-size="12" text-anchor="middle" fill="#000" >30</text>
<rect x="935" y="371" width="36" height="12" fill="#fff"/>
<rect x="936" y="372" width="33" height="10" fill="#BDF859"/>
<rect x="935.5" y="371.5" width="35" height="11" fill="none" stroke="#000" stroke-width="1" />
<text x="953.0" y="381.13" font-size="12" text-anchor="middle" font-weight="bold" fill="#000" >64</text>
<rect x="892" y="382" width="36" height="12" fill="#fff"/>
<rect x="910" y="383" width="17" height="10" fill="#EDAB95"/>
<rect x="892.5" y="382.5" width="35" height="11" fill="none" stroke="#000" stroke-width="1" />
<text x="910.0" y="391.79" font-size="12" text-anchor="middle" fill="#000" >21</text>
<rect x="935" y="382" width="36" height="12" fill="#fff"/>
<rect x="936" y="383" width="22" height="10" fill="#BDF859"/>
<rect x="935.5" y="382.5" width="35" height="11" fill="none" stroke="#000" stroke-width="1" />
<text x="953.0" y="391.79" font-size="12" text-anchor="middle" fill="#000" >42</text>
<rect x="892" y="393" width="36" height="11" fill="#fff"/>
<rect x="913" y="394" width="14" height="9" fill="#EDAB95"/>
<rect x="892.5" y="393.5" width="35" height="10" fill="none" stroke="#000" stroke-width="1" />
<text x="910.0" y="402.44" font-size="12" text-anchor="middle" fill="#000" >18</text>
<rect x="935" y="393" width="36" height="11" fill="#fff"/>
<rect x="936" y="394" width="23" height="9" fill="#BDF859"/>
<rect x="935.5" y="393.5" width="35" height="10" fill="none" stroke="#000" stroke-width="1" />
<text x="953.0" y="402.44" font-size="12" text-anchor="middle" fill="#000" >44</text>
<rect x="892" y="403" width="36" height="12" fill="#fff"/>
<rect x="919" y="404" width="8" height="10" fill="#EDAB95"/>
<rect x="892.5" y="403.5" width="35" height="11" fill="none" stroke="#000" stroke-width="1" />
<text x="910.0" y="413.1" font-size="12" text-anchor="middle" fill="#000" >10</text>
<rect x="935" y="403" width="36" height="12" fill="#fff"/>
<rect x="936" y="404" width="14" height="10" fill="#BDF859"/>
<rect x="935.5" y="403.5" width="35" height="11" fill="none" stroke="#000" stroke-width="1" />
<text x="953.0" y="413.1" font-size="12" text-anchor="middle" fill="#000" >28</text>
<rect x="892" y="414" width="36" height="12" fill="#fff"/>
<rect x="917" y="415" width="10" height="10" fill="#EDAB95"/>
<rect x="892.5" y="414.5" width="35" height="11" fill="none" stroke="#000" stroke-width="1" />
<text x="910.0" y="423.75" font-size="12" text-anchor="middle" fill="#000" >12</text>
<rect x="935" y="414" width="36" height="12" fill="#fff"/>
<rect x="936" y="415" width="23" height="10" fill="#BDF859"/>
<rect x="935.5" y="414.5" width="35" height="11" fill="none" stroke="#000" stroke-width="1" />
<text x="953.0" y="423.75" font-size="12" text-anchor="middle" fill="#000" >44</text>
<rect x="892" y="425" width="36" height="11" fill="#fff"/>
<rect x="922" y="426" width="5" height="9" fill="#EDAB95"/>
<rect x="892.5" y="425.5" width="35" height="10" fill="none" stroke="#000" stroke-width="1" />
<text x="910.0" y="434.41" font-size="12" text-anchor="middle" fill="#000" >6</text>
<rect x="935" y="425" width="36" height="11" fill="#fff"/>
<rect x="936" y="426" width="5" height="9" fill="#BDF859"/>
<rect x="935.5" y="425.5" width="35" height="10" fill="none" stroke="#000" stroke-width="1" />
<text x="953.0" y="434.41" font-size="12" text-anchor="middle" fill="#000" >9</text>
<rect x="935" y="435" width="36" height="12" fill="#fff"/>
<rect x="936" y="436" width="5" height="10" fill="#BDF859"/>
<rect x="935.5" y="435.5" width="35" height="11" fill="none" stroke="#000" stroke-width="1" />
<text x="953.0" y="445.06" font-size="12" text-anchor="middle" fill="#000" >10</text>
<rect x="935" y="446" width="36" height="11" fill="#fff"/>
<rect x="936" y="447" width="5" height="9" fill="#BDF859"/>
<rect x="935.5" y="446.5" width="35" height="10" fill="none" stroke="#000" stroke-width="1" />
<text x="953.0" y="455.72" font-size="12" text-anchor="middle" fill="#000" >9</text>
<rect x="935" y="456" width="36" height="12" fill="#fff"/>
<rect x="936" y="457" width="6" height="10" fill="#BDF859"/>
<rect x="935.5" y="456.5" width="35" height="11" fill="none" stroke="#000" stroke-width="1" />
<text x="953.0" y="466.37" font-size="12" text-anchor="middle" fill="#000" >11</text>
<rect x="935" y="467" width="36" height="12" fill="#fff"/>
<rect x="936" y="468" width="5" height="10" fill="#BDF859"/>
<rect x="935.5" y="467.5" width="35" height="11" fill="none" stroke="#000" stroke-width="1" />
<text x="953.0" y="477.03" font-size="12" text-anchor="middle" fill="#000" >10</text>
<rect x="935" y="478" width="36" height="11" fill="#fff"/>
<rect x="936" y="479" width="3" height="9" fill="#BDF859"/>
<rect x="935.5" y="478.5" width="35" height="10" fill="none" stroke="#000" stroke-width="1" />
<text x="953.0" y="487.68" font-size="12" text-anchor="middle" fill="#000" >6</text>
<rect x="929.5" y="270.5" width="4" height="213" fill="#90EE90" stroke="#000" stroke-width="1" />
<rect x="892.5" y="371.5" width="78" height="11" fill="none" stroke="#4169E1" stroke-width="1.4" />
<rect x="934.5" y="265.5" width="36" height="10" fill="none" stroke="#FFA500" stroke-width="1.2" />
<rect x="893.5" y="494.5" width="76" height="14" fill="#fff" stroke="#000" stroke-width="1" />
<text x="931.5" y="504.94" font-size="12" text-anchor="middle" fill="#000" >240</text>
<rect x="973.5" y="63.5" width="76" height="13" fill="#fff" stroke="#000" stroke-width="1" />
<text x="1011.5" y="73.65" font-size="12" text-anchor="middle" fill="#000" >147</text>
<rect x="1011" y="89" width="1" height="170" fill="#000"/>
<rect x="1015" y="84" width="36" height="11" fill="#fff"/>
<rect x="1016" y="85" width="4" height="9" fill="#BDF859"/>
<rect x="1015.5" y="84.5" width="35" height="10" fill="none" stroke="#000" stroke-width="1" />
<text x="1033.0" y="93.45" font-size="12" text-anchor="middle" fill="#000" >5</text>
<rect x="1015" y="94" width="36" height="12" fill="#fff"/>
<rect x="1016" y="95" width="8" height="10" fill="#BDF859"/>
<rect x="1015.5" y="94.5" width="35" height="11" fill="none" stroke="#000" stroke-width="1" />
<text x="1033.0" y="104.11" font-size="12" text-anchor="middle" fill="#000" >9</text>
<rect x="1015" y="105" width="36" height="12" fill="#fff"/>
<rect x="1016" y="106" width="2" height="10" fill="#BDF859"/>
<rect x="1015.5" y="105.5" width="35" height="11" fill="none" stroke="#000" stroke-width="1" />
<text x="1033.0" y="114.76" font-size="12" text-anchor="middle" fill="#000" >2</text>
<rect x="1015" y="116" width="36" height="11" fill="#fff"/>
<rect x="1016" y="117" width="5" height="9" fill="#BDF859"/>
<rect x="1015.5" y="116.5" width="35" height="10" fill="none" stroke="#000" stroke-width="1" />
<text x="1033.0" y="125.41" font-size="12" text-anchor="middle" fill="#000" >6</text>
<rect x="1015" y="126" width="36" height="12" fill="#fff"/>
<rect x="1016" y="127" width="4" height="10" fill="#BDF859"/>
<rect x="1015.5" y="126.5" width="35" height="11" fill="none" stroke="#000" stroke-width="1" />
<text x="1033.0" y="136.07" font-size="12" text-anchor="middle" fill="#000" >4</text>
<rect x="1015" y="137" width="36" height="11" fill="#fff"/>
<rect x="1016" y="138" width="8" height="9" fill="#BDF859"/>
<rect x="1015.5" y="137.5" width="35" height="10" fill="none" stroke="#000" stroke-width="1" />
<text x="1033.0" y="146.72" font-size="12" text-anchor="middle" fill="#000" >9</text>
<rect x="972" y="147" width="36" height="12" fill="#fff"/>
<rect x="1005" y="148" width="2" height="10" fill="#EDAB95"/>
<rect x="972.5" y="147.5" width="35" height="11" fill="none" stroke="#000" stroke-width="1" />
<text x="990.0" y="157.38" font-size="12" text-anchor="middle" fill="#000" >4</text>
<rect x="1015" y="147" width="36" height="12" fill="#fff"/>
<rect x="1016" y="148" width="21" height="10" fill="#BDF859"/>
<rect x="1015.5" y="147.5" width="35" height="11" fill="none" stroke="#000" stroke-width="1" />
<text x="1033.0" y="157.38" font-size="12" text-anchor="middle" fill="#000" >23</text>
<rect x="972" y="158" width="36" height="12" fill="#fff"/>
<rect x="995" y="159" width="12" height="10" fill="#EDAB95"/>
<rect x="972.5" y="158.5" width="35" height="11" fill="none" stroke="#000" stroke-width="1" />
<text x="990.0" y="168.03" font-size="12" text-anchor="middle" fill="#000" >21</text>
<rect x="1015" y="158" width="36" height="12" fill="#fff"/>
<rect x="1016" y="159" width="22" height="10" fill="#BDF859"/>
<rect x="1015.5" y="158.5" width="35" height="11" fill="none" stroke="#000" stroke-width="1" />
<text x="1033.0" y="168.03" font-size="12" text-anchor="middle" fill="#000" >25</text>
<rect x="972" y="169" width="36" height="11" fill="#fff"/>
<rect x="992" y="170" width="15" height="9" fill="#EDAB95"/>
<rect x="972.5" y="169.5" width="35" height="10" fill="none" stroke="#000" stroke-width="1" />
<text x="990.0" y="178.69" font-size="12" text-anchor="middle" fill="#000" >26</text>
<rect x="1015" y="169" width="36" height="11" fill="#fff"/>
<rect x="1016" y="170" width="33" height="9" fill="#BDF859"/>
<rect x="1015.5" y="169.5" width="35" height="10" fill="none" stroke="#000" stroke-width="1" />
<text x="1033.0" y="178.69" font-size="12" text-anchor="middle" fill="#000" >37</text>
<rect x="972" y="179" width="36" height="12" fill="#fff"/>
<rect x="1001" y="180" width="6" height="10" fill="#EDAB95"/>
<rect x="972.5" y="179.5" width="35" height="11" fill="none" stroke="#000" stroke-width="1" />
<text x="990.0" y="189.34" font-size="12" text-anchor="middle" fill="#000" >11</text>
<rect x="1015" y="179" width="36" height="12" fill="#fff"/>
<rect x="1016" y="180" width="27" height="10" fill="#BDF859"/>
<rect x="1015.5" y="179.5" width="35" height="11" fill="none" stroke="#000" stroke-width="1" />
<text x="1033.0" y="189.34" font-size="12" text-anchor="middle" fill="#000" >30</text>
<rect x="972" y="190" width="36" height="12" fill="#fff"/>
<rect x="992" y="191" width="15" height="10" fill="#EDAB95"/>
<rect x="972.5" y="190.5" width="35" height="11" fill="none" stroke="#000" stroke-width="1" />
<text x="990.0" y="200.0" font-size="12" text-anchor="middle" fill="#000" >25</text>
<rect x="1015" y="190" width="36" height="12" fill="#fff"/>
<rect x="1016" y="191" width="24" height="10" fill="#BDF859"/>
<rect x="1015.5" y="190.5" width="35" height="11" fill="none" stroke="#000" stroke-width="1" />
<text x="1033.0" y="200.0" font-size="12" text-anchor="middle" fill="#000" >27</text>
<rect x="972" y="201" width="36" height="11" fill="#fff"/>
<rect x="988" y="202" width="19" height="9" fill="#EDAB95"/>
<rect x="972.5" y="201.5" width="35" height="10" fill="none" stroke="#000" stroke-width="1" />
<text x="990.0" y="210.66" font-size="12" text-anchor="middle" fill="#000" >33</text>
<rect x="1015" y="201" width="36" height="11" fill="#fff"/>
<rect x="1016" y="202" width="27" height="9" fill="#BDF859"/>
<rect x="1015.5" y="201.5" width="35" height="10" fill="none" stroke="#000" stroke-width="1" />
<text x="1033.0" y="210.66" font-size="12" text-anchor="middle" fill="#000" >30</text>
<rect x="972" y="211" width="36" height="12" fill="#fff"/>
<rect x="990" y="212" width="17" height="10" fill="#EDAB95"/>
<rect x="972.5" y="211.5" width="35" height="11" fill="none" stroke="#000" stroke-width="1" />
<text x="990.0" y="221.31" font-size="12" text-anchor="middle" fill="#000" >29</text>
<rect x="1015" y="211" width="36" height="12" fill="#fff"/>
<rect x="1016" y="212" width="22" height="10" fill="#BDF859"/>
<rect x="1015.5" y="211.5" width="35" height="11" fill="none" stroke="#000" stroke-width="1" />
<text x="1033.0" y="221.31" font-size="12" text-anchor="middle" fill="#000" >25</text>
<rect x="972" y="222" width="36" height="12" fill="#fff"/>
<rect x="996" y="223" width="11" height="10" fill="#EDAB95"/>
<rect x="972.5" y="222.5" width="35" height="11" fill="none" stroke="#000" stroke-width="1" />
<text x="990.0" y="231.97" font-size="12" text-anchor="middle" fill="#000" >19</text>
<rect x="1015" y="222" width="36" height="12" fill="#fff"/>
<rect x="1016" y="223" width="15" height="10" fill="#BDF859"/>
<rect x="1015.5" y="222.5" width="35" height="11" fill="none" stroke="#000" stroke-width="1" />
<text x="1033.0" y="231.97" font-size="12" text-anchor="middle" fill="#000" >17</text>
<rect x="972" y="233" width="36" height="11" fill="#fff"/>
<rect x="974" y="234" width="33" height="9" fill="#EDAB95"/>
<rect x="972.5" y="233.5" width="35" height="10" fill="none" stroke="#000" stroke-width="1" />
<text x="990.0" y="242.62" font-size="12" text-anchor="middle" font-weight="bold" fill="#000" >56</text>
<rect x="1015" y="233" width="36" height="11" fill="#fff"/>
<rect x="1016" y="234" width="28" height="9" fill="#BDF859"/>
<rect x="1015.5" y="233.5" width="35" height="10" fill="none" stroke="#000" stroke-width="1" />
<text x="1033.0" y="242.62" font-size="12" text-anchor="middle" fill="#000" >31</text>
<rect x="972" y="243" width="36" height="12" fill="#fff"/>
<rect x="1003" y="244" width="4" height="10" fill="#EDAB95"/>
<rect x="972.5" y="243.5" width="35" height="11" fill="none" stroke="#000" stroke-width="1" />
<text x="990.0" y="253.28" font-size="12" text-anchor="middle" fill="#000" >6</text>
<rect x="1015" y="243" width="36" height="12" fill="#fff"/>
<rect x="1016" y="244" width="21" height="10" fill="#BDF859"/>
<rect x="1015.5" y="243.5" width="35" height="11" fill="none" stroke="#000" stroke-width="1" />
<text x="1033.0" y="253.28" font-size="12" text-anchor="middle" fill="#000" >24</text>
<rect x="972" y="254" width="36" height="12" fill="#fff"/>
<rect x="993" y="255" width="14" height="10" fill="#EDAB95"/>
<rect x="972.5" y="254.5" width="35" height="11" fill="none" stroke="#000" stroke-width="1" />
<text x="990.0" y="263.93" font-size="12" text-anchor="middle" fill="#000" >24</text>
<rect x="1015" y="254" width="36" height="12" fill="#fff"/>
<rect x="1016" y="255" width="16" height="10" fill="#BDF859"/>
<rect x="1015.5" y="254.5" width="35" height="11" fill="none" stroke="#000" stroke-width="1" />
<text x="1033.0" y="263.93" font-size="12" text-anchor="middle" fill="#000" >18</text>
<rect x="972" y="265" width="36" height="11" fill="#fff"/>
<rect x="1002" y="266" width="5" height="9" fill="#EDAB95"/>
<rect x="972.5" y="265.5" width="35" height="10" fill="none" stroke="#000" stroke-width="1" />
<text x="990.0" y="274.58" font-size="12" text-anchor="middle" fill="#000" >9</text>
<rect x="1015" y="265" width="36" height="11" fill="#fff"/>
<rect x="1016" y="266" width="5" height="9" fill="#BDF859"/>
<rect x="1015.5" y="265.5" width="35" height="10" fill="none" stroke="#000" stroke-width="1" />
<text x="1033.0" y="274.58" font-size="12" text-anchor="middle" fill="#000" >6</text>
<rect x="972" y="275" width="36" height="12" fill="#fff"/>
<rect x="999" y="276" width="8" height="10" fill="#EDAB95"/>
<rect x="972.5" y="275.5" width="35" height="11" fill="none" stroke="#000" stroke-width="1" />
<text x="990.0" y="285.24" font-size="12" text-anchor="middle" fill="#000" >14</text>
<rect x="972" y="286" width="36" height="12" fill="#fff"/>
<rect x="1002" y="287" width="5" height="10" fill="#EDAB95"/>
<rect x="972.5" y="286.5" width="35" height="11" fill="none" stroke="#000" stroke-width="1" />
<text x="990.0" y="295.89" font-size="12" text-anchor="middle" fill="#000" >8</text>
<rect x="972" y="297" width="36" height="11" fill="#fff"/>
<rect x="1006" y="298" width="1" height="9" fill="#EDAB95"/>
<rect x="972.5" y="297.5" width="35" height="10" fill="none" stroke="#000" stroke-width="1" />
<text x="990.0" y="306.55" font-size="12" text-anchor="middle" fill="#000" >1</text>
<rect x="1009.5" y="259.5" width="4" height="43" fill="#FF0000" stroke="#000" stroke-width="1" />
<rect x="972.5" y="233.5" width="78" height="10" fill="none" stroke="#4169E1" stroke-width="1.4" />
<rect x="972.5" y="297.5" width="37" height="10" fill="none" stroke="#FFA500" stroke-width="1.2" />
<rect x="973.5" y="313.5" width="76" height="13" fill="#fff" stroke="#000" stroke-width="1" />
<text x="1011.5" y="323.81" font-size="12" text-anchor="middle" fill="#000" >0</text>
<rect x="1053.5" y="212.5" width="76" height="13" fill="#fff" stroke="#000" stroke-width="1" />
<text x="1091.5" y="222.82" font-size="12" text-anchor="middle" fill="#000" >60</text>
<rect x="1091" y="238" width="1" height="74" fill="#000"/>
<rect x="1095" y="233" width="36" height="11" fill="#fff"/>
<rect x="1096" y="234" width="1" height="9" fill="#BDF859"/>
<rect x="1095.5" y="233.5" width="35" height="10" fill="none" stroke="#000" stroke-width="1" />
<text x="1113.0" y="242.62" font-size="12" text-anchor="middle" fill="#000" >1</text>
<rect x="1052" y="243" width="36" height="12" fill="#fff"/>
<rect x="1085" y="244" width="2" height="10" fill="#EDAB95"/>
<rect x="1052.5" y="243.5" width="35" height="11" fill="none" stroke="#000" stroke-width="1" />
<text x="1070.0" y="253.28" font-size="12" text-anchor="middle" fill="#000" >4</text>
<rect x="1095" y="243" width="36" height="12" fill="#fff"/>
<rect x="1096" y="244" width="2" height="10" fill="#BDF859"/>
<rect x="1095.5" y="243.5" width="35" height="11" fill="none" stroke="#000" stroke-width="1" />
<text x="1113.0" y="253.28" font-size="12" text-anchor="middle" fill="#000" >3</text>
<rect x="1052" y="254" width="36" height="12" fill="#fff"/>
<rect x="1082" y="255" width="5" height="10" fill="#EDAB95"/>
<rect x="1052.5" y="254.5" width="35" height="11" fill="none" stroke="#000" stroke-width="1" />
<text x="1070.0" y="263.93" font-size="12" text-anchor="middle" fill="#000" >8</text>
<rect x="1095" y="254" width="36" height="12" fill="#fff"/>
<rect x="1096" y="255" width="18" height="10" fill="#BDF859"/>
<rect x="1095.5" y="254.5" width="35" height="11" fill="none" stroke="#000" stroke-width="1" />
<text x="1113.0" y="263.93" font-size="12" text-anchor="middle" fill="#000" >34</text>
<rect x="1052" y="265" width="36" height="11" fill="#fff"/>
<rect x="1073" y="266" width="14" height="9" fill="#EDAB95"/>
<rect x="1052.5" y="265.5" width="35" height="10" fill="none" stroke="#000" stroke-width="1" />
<text x="1070.0" y="274.58" font-size="12" text-anchor="middle" fill="#000" >23</text>
<rect x="1095" y="265" width="36" height="11" fill="#fff"/>
<rect x="1096" y="266" width="20" height="9" fill="#BDF859"/>
<rect x="1095.5" y="265.5" width="35" height="10" fill="none" stroke="#000" stroke-width="1" />
<text x="1113.0" y="274.58" font-size="12" text-anchor="middle" fill="#000" >38</text>
<rect x="1052" y="275" width="36" height="12" fill="#fff"/>
<rect x="1079" y="276" width="8" height="10" fill="#EDAB95"/>
<rect x="1052.5" y="275.5" width="35" height="11" fill="none" stroke="#000" stroke-width="1" />
<text x="1070.0" y="285.24" font-size="12" text-anchor="middle" fill="#000" >13</text>
<rect x="1095" y="275" width="36" height="12" fill="#fff"/>
<rect x="1096" y="276" width="10" height="10" fill="#BDF859"/>
<rect x="1095.5" y="275.5" width="35" height="11" fill="none" stroke="#000" stroke-width="1" />
<text x="1113.0" y="285.24" font-size="12" text-anchor="middle" fill="#000" >20</text>
<rect x="1052" y="286" width="36" height="12" fill="#fff"/>
<rect x="1073" y="287" width="14" height="10" fill="#EDAB95"/>
<rect x="1052.5" y="286.5" width="35" height="11" fill="none" stroke="#000" stroke-width="1" />
<text x="1070.0" y="295.89" font-size="12" text-anchor="middle" fill="#000" >23</text>
<rect x="1095" y="286" width="36" height="12" fill="#fff"/>
<rect x="1096" y="287" width="18" height="10" fill="#BDF859"/>
<rect x="1095.5" y="286.5" width="35" height="11" fill="none" stroke="#000" stroke-width="1" />
<text x="1113.0" y="295.89" font-size="12" text-anchor="middle" fill="#000" >35</text>
<rect x="1052" y="297" width="36" height="11" fill="#fff"/>
<rect x="1072" y="298" width="15" height="9" fill="#EDAB95"/>
<rect x="1052.5" y="297.5" width="35" height="10" fill="none" stroke="#000" stroke-width="1" />
<text x="1070.0" y="306.55" font-size="12" text-anchor="middle" fill="#000" >25</text>
<rect x="1095" y="297" width="36" height="11" fill="#fff"/>
<rect x="1096" y="298" width="9" height="9" fill="#BDF859"/>
<rect x="1095.5" y="297.5" width="35" height="10" fill="none" stroke="#000" stroke-width="1" />
<text x="1113.0" y="306.55" font-size="12" text-anchor="middle" fill="#000" >18</text>
<rect x="1052" y="307" width="36" height="12" fill="#fff"/>
<rect x="1068" y="308" width="19" height="10" fill="#EDAB95"/>
<rect x="1052.5" y="307.5" width="35" height="11" fill="none" stroke="#000" stroke-width="1" />
<text x="1070.0" y="317.2" font-size="12" text-anchor="middle" fill="#000" >31</text>
<rect x="1095" y="307" width="36" height="12" fill="#fff"/>
<rect x="1096" y="308" width="7" height="10" fill="#BDF859"/>
<rect x="1095.5" y="307.5" width="35" height="11" fill="none" stroke="#000" stroke-width="1" />
<text x="1113.0" y="317.2" font-size="12" text-anchor="middle" fill="#000" >14</text>
<rect x="1052" y="318" width="36" height="12" fill="#fff"/>
<rect x="1062" y="319" width="25" height="10" fill="#EDAB95"/>
<rect x="1052.5" y="318.5" width="35" height="11" fill="none" stroke="#000" stroke-width="1" />
<text x="1070.0" y="327.86" font-size="12" text-anchor="middle" fill="#000" >41</text>
<rect x="1095" y="318" width="36" height="12" fill="#fff"/>
<rect x="1096" y="319" width="17" height="10" fill="#BDF859"/>
<rect x="1095.5" y="318.5" width="35" height="11" fill="none" stroke="#000" stroke-width="1" />
<text x="1113.0" y="327.86" font-size="12" text-anchor="middle" fill="#000" >32</text>
<rect x="1052" y="329" width="36" height="11" fill="#fff"/>
<rect x="1066" y="330" width="21" height="9" fill="#EDAB95"/>
<rect x="1052.5" y="329.5" width="35" height="10" fill="none" stroke="#000" stroke-width="1" />
<text x="1070.0" y="338.51" font-size="12" text-anchor="middle" fill="#000" >34</text>
<rect x="1095" y="329" width="36" height="11" fill="#fff"/>
<rect x="1096" y="330" width="33" height="9" fill="#BDF859"/>
<rect x="1095.5" y="329.5" width="35" height="10" fill="none" stroke="#000" stroke-width="1" />
<text x="1113.0" y="338.51" font-size="12" text-anchor="middle" fill="#000" >63</text>
<rect x="1052" y="339" width="36" height="12" fill="#fff"/>
<rect x="1054" y="340" width="33" height="10" fill="#EDAB95"/>
<rect x="1052.5" y="339.5" width="35" height="11" fill="none" stroke="#000" stroke-width="1" />
<text x="1070.0" y="349.17" font-size="12" text-anchor="middle" font-weight="bold" fill="#000" >54</text>
<rect x="1095" y="339" width="36" height="12" fill="#fff"/>
<rect x="1096" y="340" width="13" height="10" fill="#BDF859"/>
<rect x="1095.5" y="339.5" width="35" height="11" fill="none" stroke="#000" stroke-width="1" />
<text x="1113.0" y="349.17" font-size="12" text-anchor="middle" fill="#000" >24</text>
<rect x="1052" y="350" width="36" height="12" fill="#fff"/>
<rect x="1070" y="351" width="17" height="10" fill="#EDAB95"/>
<rect x="1052.5" y="350.5" width="35" height="11" fill="none" stroke="#000" stroke-width="1" />
<text x="1070.0" y="359.82" font-size="12" text-anchor="middle" fill="#000" >28</text>
<rect x="1095" y="350" width="36" height="12" fill="#fff"/>
<rect x="1096" y="351" width="14" height="10" fill="#BDF859"/>
<rect x="1095.5" y="350.5" width="35" height="11" fill="none" stroke="#000" stroke-width="1" />
<text x="1113.0" y="359.82" font-size="12" text-anchor="middle" fill="#000" >26</text>
<rect x="1052" y="361" width="36" height="11" fill="#fff"/>
<rect x="1063" y="362" width="24" height="9" fill="#EDAB95"/>
<rect x="1052.5" y="361.5" width="35" height="10" fill="none" stroke="#000" stroke-width="1" />
<text x="1070.0" y="370.48" font-size="12" text-anchor="middle" fill="#000" >40</text>
<rect x="1095" y="361" width="36" height="11" fill="#fff"/>
<rect x="1096" y="362" width="23" height="9" fill="#BDF859"/>
<rect x="1095.5" y="361.5" width="35" height="10" fill="none" stroke="#000" stroke-width="1" />
<text x="1113.0" y="370.48" font-size="12" text-anchor="middle" fill="#000" >43</text>
<rect x="1052" y="371" width="36" height="12" fill="#fff"/>
<rect x="1056" y="372" width="31" height="10" fill="#EDAB95"/>
<rect x="1052.5" y="371.5" width="35" height="11" fill="none" stroke="#000" stroke-width="1" />
<text x="1070.0" y="381.13" font-size="12" text-anchor="middle" fill="#000" >51</text>
<rect x="1095" y="371" width="36" height="12" fill="#fff"/>
<rect x="1096" y="372" width="19" height="10" fill="#BDF859"/>
<rect x="1095.5" y="371.5" width="35" height="11" fill="none" stroke="#000" stroke-width="1" />
<text x="1113.0" y="381.13" font-size="12" text-anchor="middle" fill="#000" >36</text>
<rect x="1052" y="382" width="36" height="12" fill="#fff"/>
<rect x="1069" y="383" width="18" height="10" fill="#EDAB95"/>
<rect x="1052.5" y="382.5" width="35" height="11" fill="none" stroke="#000" stroke-width="1" />
<text x="1070.0" y="391.79" font-size="12" text-anchor="middle" fill="#000" >29</text>
<rect x="1095" y="382" width="36" height="12" fill="#fff"/>
<rect x="1096" y="383" width="8" height="10" fill="#BDF859"/>
<rect x="1095.5" y="382.5" width="35" height="11" fill="none" stroke="#000" stroke-width="1" />
<text x="1113.0" y="391.79" font-size="12" text-anchor="middle" fill="#000" >15</text>
<rect x="1052" y="393" width="36" height="11" fill="#fff"/>
<rect x="1070" y="394" width="17" height="9" fill="#EDAB95"/>
<rect x="1052.5" y="393.5" width="35" height="10" fill="none" stroke="#000" stroke-width="1" />
<text x="1070.0" y="402.44" font-size="12" text-anchor="middle" fill="#000" >28</text>
<rect x="1095" y="393" width="36" height="11" fill="#fff"/>
<rect x="1096" y="394" width="9" height="9" fill="#BDF859"/>
<rect x="1095.5" y="393.5" width="35" height="10" fill="none" stroke="#000" stroke-width="1" />
<text x="1113.0" y="402.44" font-size="12" text-anchor="middle" fill="#000" >17</text>
<rect x="1052" y="403" width="36" height="12" fill="#fff"/>
<rect x="1080" y="404" width="7" height="10" fill="#EDAB95"/>
<rect x="1052.5" y="403.5" width="35" height="11" fill="none" stroke="#000" stroke-width="1" />
<text x="1070.0" y="413.1" font-size="12" text-anchor="middle" fill="#000" >11</text>
<rect x="1095" y="403" width="36" height="12" fill="#fff"/>
<rect x="1096" y="404" width="7" height="10" fill="#BDF859"/>
<rect x="1095.5" y="403.5" width="35" height="11" fill="none" stroke="#000" stroke-width="1" />
<text x="1113.0" y="413.1" font-size="12" text-anchor="middle" fill="#000" >13</text>
<rect x="1052" y="414" width="36" height="12" fill="#fff"/>
<rect x="1083" y="415" width="4" height="10" fill="#EDAB95"/>
<rect x="1052.5" y="414.5" width="35" height="11" fill="none" stroke="#000" stroke-width="1" />
<text x="1070.0" y="423.75" font-size="12" text-anchor="middle" fill="#000" >7</text>
<rect x="1095" y="414" width="36" height="12" fill="#fff"/>
<rect x="1096" y="415" width="7" height="10" fill="#BDF859"/>
<rect x="1095.5" y="414.5" width="35" height="11" fill="none" stroke="#000" stroke-width="1" />
<text x="1113.0" y="423.75" font-size="12" text-anchor="middle" fill="#000" >13</text>
<rect x="1052" y="425" width="36" height="11" fill="#fff"/>
<rect x="1080" y="426" width="7" height="9" fill="#EDAB95"/>
<rect x="1052.5" y="425.5" width="35" height="10" fill="none" stroke="#000" stroke-width="1" />
<text x="1070.0" y="434.41" font-size="12" text-anchor="middle" fill="#000" >12</text>
<rect x="1095" y="425" width="36" height="11" fill="#fff"/>
<rect x="1096" y="426" width="3" height="9" fill="#BDF859"/>
<rect x="1095.5" y="425.5" width="35" height="10" fill="none" stroke="#000" stroke-width="1" />
<text x="1113.0" y="434.41" font-size="12" text-anchor="middle" fill="#000" >5</text>
<rect x="1052" y="435" width="36" height="12" fill="#fff"/>
<rect x="1086" y="436" width="1" height="10" fill="#EDAB95"/>
<rect x="1052.5" y="435.5" width="35" height="11" fill="none" stroke="#000" stroke-width="1" />
<text x="1070.0" y="445.06" font-size="12" text-anchor="middle" fill="#000" >2</text>
<rect x="1052" y="446" width="36" height="11" fill="#fff"/>
<rect x="1084" y="447" width="3" height="9" fill="#EDAB95"/>
<rect x="1052.5" y="446.5" width="35" height="10" fill="none" stroke="#000" stroke-width="1" />
<text x="1070.0" y="455.72" font-size="12" text-anchor="middle" fill="#000" >5</text>
<rect x="1089.5" y="312.5" width="4" height="139" fill="#FF0000" stroke="#000" stroke-width="1" />
<rect x="1052.5" y="329.5" width="78" height="10" fill="none" stroke="#4169E1" stroke-width="1.4" />
<rect x="1052.5" y="446.5" width="37" height="10" fill="none" stroke="#FFA500" stroke-width="1.2" />
<rect x="1053.5" y="462.5" width="76" height="14" fill="#fff" stroke="#000" stroke-width="1" />
<text x="1091.5" y="472.97" font-size="12" text-anchor="middle" fill="#000" >0</text>
<g shape-rendering="auto">
<line x1="243" y1="498.5" x2="849" y2="494.5" stroke="#FF4848" stroke-width="1.8"/>
<line x1="692.5" y1="347" x2="869.5" y2="416" stroke="#FF4848" stroke-width="1.8"/>
<rect x="885.5" y="376.5" width="165" height="133" rx="11" ry="11" fill="none" stroke="#DD60EE" stroke-width="2"/>
<line x1="975" y1="510" x2="975" y2="569" stroke="#DD60EE" stroke-width="2"/>
<rect x="909.5" y="719.5" width="134" height="21" rx="10.5" ry="10.5" fill="none" stroke="#DD60EE" stroke-width="2"/>
</g>
<text x="473" y="347" font-size="16" text-anchor="start" fill="#000" id="ann1" letter-spacing="-0.12">ordenes de compra a mercado</text>
<text x="464" y="475" font-size="16" text-anchor="start" fill="#000" id="ann2" letter-spacing="-0.16">resistencia</text>
<rect x="312" y="85" width="2" height="2" fill="#FF4343"/>
<rect x="13.5" y="583.5" width="76" height="16" fill="#D6FA97" stroke="#000" stroke-width="1" />
<text x="51.5" y="595.7" font-size="13" text-anchor="middle" fill="#000" >Buyers:568</text>
<rect x="13.5" y="603.5" width="76" height="16" fill="#D6FA97" stroke="#000" stroke-width="1" />
<text x="51.5" y="615.7" font-size="13" text-anchor="middle" fill="#000" >Sellers:437</text>
<rect x="13.5" y="624.5" width="76" height="16" fill="#fff" stroke="#000" stroke-width="1" />
<text x="51.5" y="636.7" font-size="13" text-anchor="middle" fill="#000" >Delta:13.03</text>
<rect x="13.5" y="644.5" width="76" height="16" fill="#D6FA97" stroke="#000" stroke-width="1" />
<text x="51.5" y="656.7" font-size="13" text-anchor="middle" fill="#000" >Buyers:56.</text>
<rect x="13.5" y="664.5" width="76" height="16" fill="#D6FA97" stroke="#000" stroke-width="1" />
<text x="51.5" y="676.7" font-size="13" text-anchor="middle" fill="#000" >Sellers:43.</text>
<rect x="13.5" y="686.5" width="76" height="16" fill="#1E90FF" stroke="#000" stroke-width="1" />
<text x="51.5" y="698.3" font-size="13" text-anchor="middle" fill="#000" >Vol:1,005</text>
<rect x="93.5" y="583.5" width="76" height="16" fill="#D6FA97" stroke="#000" stroke-width="1" />
<text x="131.5" y="595.7" font-size="13" text-anchor="middle" fill="#000" >Buyers:397</text>
<rect x="93.5" y="603.5" width="76" height="16" fill="#D6FA97" stroke="#000" stroke-width="1" />
<text x="131.5" y="615.7" font-size="13" text-anchor="middle" fill="#000" >Sellers:273</text>
<rect x="93.5" y="624.5" width="76" height="16" fill="#fff" stroke="#000" stroke-width="1" />
<text x="131.5" y="636.7" font-size="13" text-anchor="middle" fill="#000" >Delta:18.51</text>
<rect x="93.5" y="644.5" width="76" height="16" fill="#D6FA97" stroke="#000" stroke-width="1" />
<text x="131.5" y="656.7" font-size="13" text-anchor="middle" fill="#000" >Buyers:59.</text>
<rect x="93.5" y="664.5" width="76" height="16" fill="#D6FA97" stroke="#000" stroke-width="1" />
<text x="131.5" y="676.7" font-size="13" text-anchor="middle" fill="#000" >Sellers:40.</text>
<rect x="93.5" y="686.5" width="76" height="16" fill="#1E90FF" stroke="#000" stroke-width="1" />
<text x="131.5" y="698.3" font-size="13" text-anchor="middle" fill="#000" >Vol:670</text>
<rect x="173.5" y="583.5" width="76" height="16" fill="#D6FA97" stroke="#000" stroke-width="1" />
<text x="211.5" y="595.7" font-size="13" text-anchor="middle" fill="#000" >Buyers:432</text>
<rect x="173.5" y="603.5" width="76" height="16" fill="#D6FA97" stroke="#000" stroke-width="1" />
<text x="211.5" y="615.7" font-size="13" text-anchor="middle" fill="#000" >Sellers:423</text>
<rect x="173.5" y="624.5" width="76" height="16" fill="#fff" stroke="#000" stroke-width="1" />
<text x="211.5" y="636.7" font-size="13" text-anchor="middle" fill="#000" >Delta:1.05</text>
<rect x="173.5" y="644.5" width="76" height="16" fill="#D6FA97" stroke="#000" stroke-width="1" />
<text x="211.5" y="656.7" font-size="13" text-anchor="middle" fill="#000" >Buyers:50.</text>
<rect x="173.5" y="664.5" width="76" height="16" fill="#D6FA97" stroke="#000" stroke-width="1" />
<text x="211.5" y="676.7" font-size="13" text-anchor="middle" fill="#000" >Sellers:49.</text>
<rect x="173.5" y="686.5" width="76" height="16" fill="#1E90FF" stroke="#000" stroke-width="1" />
<text x="211.5" y="698.3" font-size="13" text-anchor="middle" fill="#000" >Vol:855</text>
<rect x="253.5" y="583.5" width="76" height="16" fill="#F4CABC" stroke="#000" stroke-width="1" />
<text x="291.5" y="595.7" font-size="13" text-anchor="middle" fill="#000" >Buyers:311</text>
<rect x="253.5" y="603.5" width="76" height="16" fill="#F4CABC" stroke="#000" stroke-width="1" />
<text x="291.5" y="615.7" font-size="13" text-anchor="middle" fill="#000" >Sellers:353</text>
<rect x="253.5" y="624.5" width="76" height="16" fill="#fff" stroke="#000" stroke-width="1" />
<text x="291.5" y="636.7" font-size="13" text-anchor="middle" fill="#000"  letter-spacing="0.25">Delta:-6.33</text>
<rect x="253.5" y="644.5" width="76" height="16" fill="#F4CABC" stroke="#000" stroke-width="1" />
<text x="291.5" y="656.7" font-size="13" text-anchor="middle" fill="#000" >Buyers:46.</text>
<rect x="253.5" y="664.5" width="76" height="16" fill="#F4CABC" stroke="#000" stroke-width="1" />
<text x="291.5" y="676.7" font-size="13" text-anchor="middle" fill="#000" >Sellers:53.</text>
<rect x="253.5" y="686.5" width="76" height="16" fill="#1E90FF" stroke="#000" stroke-width="1" />
<text x="291.5" y="698.3" font-size="13" text-anchor="middle" fill="#000" >Vol:664</text>
<rect x="333.5" y="583.5" width="76" height="16" fill="#F4CABC" stroke="#000" stroke-width="1" />
<text x="371.5" y="595.7" font-size="13" text-anchor="middle" fill="#000" >Buyers:517</text>
<rect x="333.5" y="603.5" width="76" height="16" fill="#F4CABC" stroke="#000" stroke-width="1" />
<text x="371.5" y="615.7" font-size="13" text-anchor="middle" fill="#000" >Sellers:559</text>
<rect x="333.5" y="624.5" width="76" height="16" fill="#fff" stroke="#000" stroke-width="1" />
<text x="371.5" y="636.7" font-size="13" text-anchor="middle" fill="#000"  letter-spacing="0.25">Delta:-3.90</text>
<rect x="333.5" y="644.5" width="76" height="16" fill="#F4CABC" stroke="#000" stroke-width="1" />
<text x="371.5" y="656.7" font-size="13" text-anchor="middle" fill="#000" >Buyers:48.</text>
<rect x="333.5" y="664.5" width="76" height="16" fill="#F4CABC" stroke="#000" stroke-width="1" />
<text x="371.5" y="676.7" font-size="13" text-anchor="middle" fill="#000" >Sellers:51.</text>
<rect x="333.5" y="686.5" width="76" height="16" fill="#1E90FF" stroke="#000" stroke-width="1" />
<text x="371.5" y="698.3" font-size="13" text-anchor="middle" fill="#000" >Vol:1,076</text>
<rect x="413.5" y="583.5" width="76" height="16" fill="#D6FA97" stroke="#000" stroke-width="1" />
<text x="451.5" y="595.7" font-size="13" text-anchor="middle" fill="#000" >Buyers:393</text>
<rect x="413.5" y="603.5" width="76" height="16" fill="#D6FA97" stroke="#000" stroke-width="1" />
<text x="451.5" y="615.7" font-size="13" text-anchor="middle" fill="#000" >Sellers:333</text>
<rect x="413.5" y="624.5" width="76" height="16" fill="#fff" stroke="#000" stroke-width="1" />
<text x="451.5" y="636.7" font-size="13" text-anchor="middle" fill="#000" >Delta:8.26</text>
<rect x="413.5" y="644.5" width="76" height="16" fill="#D6FA97" stroke="#000" stroke-width="1" />
<text x="451.5" y="656.7" font-size="13" text-anchor="middle" fill="#000" >Buyers:54.</text>
<rect x="413.5" y="664.5" width="76" height="16" fill="#D6FA97" stroke="#000" stroke-width="1" />
<text x="451.5" y="676.7" font-size="13" text-anchor="middle" fill="#000" >Sellers:45.</text>
<rect x="413.5" y="686.5" width="76" height="16" fill="#1E90FF" stroke="#000" stroke-width="1" />
<text x="451.5" y="698.3" font-size="13" text-anchor="middle" fill="#000" >Vol:726</text>
<rect x="493.5" y="583.5" width="76" height="16" fill="#D6FA97" stroke="#000" stroke-width="1" />
<text x="531.5" y="595.7" font-size="13" text-anchor="middle" fill="#000" >Buyers:335</text>
<rect x="493.5" y="603.5" width="76" height="16" fill="#D6FA97" stroke="#000" stroke-width="1" />
<text x="531.5" y="615.7" font-size="13" text-anchor="middle" fill="#000" >Sellers:292</text>
<rect x="493.5" y="624.5" width="76" height="16" fill="#fff" stroke="#000" stroke-width="1" />
<text x="531.5" y="636.7" font-size="13" text-anchor="middle" fill="#000" >Delta:6.86</text>
<rect x="493.5" y="644.5" width="76" height="16" fill="#D6FA97" stroke="#000" stroke-width="1" />
<text x="531.5" y="656.7" font-size="13" text-anchor="middle" fill="#000" >Buyers:53.</text>
<rect x="493.5" y="664.5" width="76" height="16" fill="#D6FA97" stroke="#000" stroke-width="1" />
<text x="531.5" y="676.7" font-size="13" text-anchor="middle" fill="#000" >Sellers:46.</text>
<rect x="493.5" y="686.5" width="76" height="16" fill="#1E90FF" stroke="#000" stroke-width="1" />
<text x="531.5" y="698.3" font-size="13" text-anchor="middle" fill="#000" >Vol:627</text>
<rect x="573.5" y="583.5" width="76" height="16" fill="#D6FA97" stroke="#000" stroke-width="1" />
<text x="611.5" y="595.7" font-size="13" text-anchor="middle" fill="#000" >Buyers:1,0</text>
<rect x="573.5" y="603.5" width="76" height="16" fill="#D6FA97" stroke="#000" stroke-width="1" />
<text x="611.5" y="615.7" font-size="13" text-anchor="middle" fill="#000" >Sellers:1,0</text>
<rect x="573.5" y="624.5" width="76" height="16" fill="#fff" stroke="#000" stroke-width="1" />
<text x="611.5" y="636.7" font-size="13" text-anchor="middle" fill="#000" >Delta:1.23</text>
<rect x="573.5" y="644.5" width="76" height="16" fill="#D6FA97" stroke="#000" stroke-width="1" />
<text x="611.5" y="656.7" font-size="13" text-anchor="middle" fill="#000" >Buyers:50.</text>
<rect x="573.5" y="664.5" width="76" height="16" fill="#D6FA97" stroke="#000" stroke-width="1" />
<text x="611.5" y="676.7" font-size="13" text-anchor="middle" fill="#000" >Sellers:49.</text>
<rect x="573.5" y="686.5" width="76" height="16" fill="#1E90FF" stroke="#000" stroke-width="1" />
<text x="611.5" y="698.3" font-size="13" text-anchor="middle" fill="#000" >Vol:2,031</text>
<rect x="653.5" y="583.5" width="76" height="16" fill="#F4CABC" stroke="#000" stroke-width="1" />
<text x="691.5" y="595.7" font-size="13" text-anchor="middle" fill="#000" >Buyers:572</text>
<rect x="653.5" y="603.5" width="76" height="16" fill="#F4CABC" stroke="#000" stroke-width="1" />
<text x="691.5" y="615.7" font-size="13" text-anchor="middle" fill="#000" >Sellers:595</text>
<rect x="653.5" y="624.5" width="76" height="16" fill="#fff" stroke="#000" stroke-width="1" />
<text x="691.5" y="636.7" font-size="13" text-anchor="middle" fill="#000"  letter-spacing="0.25">Delta:-1.97</text>
<rect x="653.5" y="644.5" width="76" height="16" fill="#F4CABC" stroke="#000" stroke-width="1" />
<text x="691.5" y="656.7" font-size="13" text-anchor="middle" fill="#000" >Buyers:49.</text>
<rect x="653.5" y="664.5" width="76" height="16" fill="#F4CABC" stroke="#000" stroke-width="1" />
<text x="691.5" y="676.7" font-size="13" text-anchor="middle" fill="#000" >Sellers:50.</text>
<rect x="653.5" y="686.5" width="76" height="16" fill="#1E90FF" stroke="#000" stroke-width="1" />
<text x="691.5" y="698.3" font-size="13" text-anchor="middle" fill="#000" >Vol:1,167</text>
<rect x="733.5" y="583.5" width="76" height="16" fill="#F4CABC" stroke="#000" stroke-width="1" />
<text x="771.5" y="595.7" font-size="13" text-anchor="middle" fill="#000" >Buyers:105</text>
<rect x="733.5" y="603.5" width="76" height="16" fill="#F4CABC" stroke="#000" stroke-width="1" />
<text x="771.5" y="615.7" font-size="13" text-anchor="middle" fill="#000" >Sellers:112</text>
<rect x="733.5" y="624.5" width="76" height="16" fill="#fff" stroke="#000" stroke-width="1" />
<text x="771.5" y="636.7" font-size="13" text-anchor="middle" fill="#000"  letter-spacing="0.25">Delta:-3.23</text>
<rect x="733.5" y="644.5" width="76" height="16" fill="#F4CABC" stroke="#000" stroke-width="1" />
<text x="771.5" y="656.7" font-size="13" text-anchor="middle" fill="#000" >Buyers:48.</text>
<rect x="733.5" y="664.5" width="76" height="16" fill="#F4CABC" stroke="#000" stroke-width="1" />
<text x="771.5" y="676.7" font-size="13" text-anchor="middle" fill="#000" >Sellers:51.</text>
<rect x="733.5" y="686.5" width="76" height="16" fill="#1E90FF" stroke="#000" stroke-width="1" />
<text x="771.5" y="698.3" font-size="13" text-anchor="middle" fill="#000" >Vol:217</text>
<rect x="813.5" y="583.5" width="76" height="16" fill="#D6FA97" stroke="#000" stroke-width="1" />
<text x="851.5" y="595.7" font-size="13" text-anchor="middle" fill="#000" >Buyers:340</text>
<rect x="813.5" y="603.5" width="76" height="16" fill="#D6FA97" stroke="#000" stroke-width="1" />
<text x="851.5" y="615.7" font-size="13" text-anchor="middle" fill="#000" >Sellers:180</text>
<rect x="813.5" y="624.5" width="76" height="16" fill="#D6FA97" stroke="#000" stroke-width="1" />
<text x="851.5" y="636.7" font-size="13" text-anchor="middle" fill="#000" >Delta:30.77</text>
<rect x="813.5" y="644.5" width="76" height="16" fill="#D6FA97" stroke="#000" stroke-width="1" />
<text x="851.5" y="656.7" font-size="13" text-anchor="middle" fill="#000" >Buyers:65.</text>
<rect x="813.5" y="664.5" width="76" height="16" fill="#D6FA97" stroke="#000" stroke-width="1" />
<text x="851.5" y="676.7" font-size="13" text-anchor="middle" fill="#000" >Sellers:34.</text>
<rect x="813.5" y="686.5" width="76" height="16" fill="#1E90FF" stroke="#000" stroke-width="1" />
<text x="851.5" y="698.3" font-size="13" text-anchor="middle" fill="#000" >Vol:520</text>
<rect x="893.5" y="583.5" width="76" height="16" fill="#D6FA97" stroke="#000" stroke-width="1" />
<text x="931.5" y="595.7" font-size="13" text-anchor="middle" fill="#000" >Buyers:462</text>
<rect x="893.5" y="603.5" width="76" height="16" fill="#D6FA97" stroke="#000" stroke-width="1" />
<text x="931.5" y="615.7" font-size="13" text-anchor="middle" fill="#000" >Sellers:216</text>
<rect x="893.5" y="624.5" width="76" height="16" fill="#D6FA97" stroke="#000" stroke-width="1" />
<text x="931.5" y="636.7" font-size="13" text-anchor="middle" fill="#000" >Delta:36.28</text>
<rect x="893.5" y="644.5" width="76" height="16" fill="#D6FA97" stroke="#000" stroke-width="1" />
<text x="931.5" y="656.7" font-size="13" text-anchor="middle" fill="#000" >Buyers:68.</text>
<rect x="893.5" y="664.5" width="76" height="16" fill="#D6FA97" stroke="#000" stroke-width="1" />
<text x="931.5" y="676.7" font-size="13" text-anchor="middle" fill="#000" >Sellers:31.</text>
<rect x="893.5" y="686.5" width="76" height="16" fill="#1E90FF" stroke="#000" stroke-width="1" />
<text x="931.5" y="698.3" font-size="13" text-anchor="middle" fill="#000" >Vol:678</text>
<rect x="973.5" y="583.5" width="76" height="16" fill="#D6FA97" stroke="#000" stroke-width="1" />
<text x="1011.5" y="595.7" font-size="13" text-anchor="middle" fill="#000" >Buyers:328</text>
<rect x="973.5" y="603.5" width="76" height="16" fill="#D6FA97" stroke="#000" stroke-width="1" />
<text x="1011.5" y="615.7" font-size="13" text-anchor="middle" fill="#000" >Sellers:286</text>
<rect x="973.5" y="624.5" width="76" height="16" fill="#fff" stroke="#000" stroke-width="1" />
<text x="1011.5" y="636.7" font-size="13" text-anchor="middle" fill="#000" >Delta:6.84</text>
<rect x="973.5" y="644.5" width="76" height="16" fill="#D6FA97" stroke="#000" stroke-width="1" />
<text x="1011.5" y="656.7" font-size="13" text-anchor="middle" fill="#000" >Buyers:53.</text>
<rect x="973.5" y="664.5" width="76" height="16" fill="#D6FA97" stroke="#000" stroke-width="1" />
<text x="1011.5" y="676.7" font-size="13" text-anchor="middle" fill="#000" >Sellers:46.</text>
<rect x="973.5" y="686.5" width="76" height="16" fill="#1E90FF" stroke="#000" stroke-width="1" />
<text x="1011.5" y="698.3" font-size="13" text-anchor="middle" fill="#000" >Vol:614</text>
<rect x="1053.5" y="583.5" width="76" height="16" fill="#F4CABC" stroke="#000" stroke-width="1" />
<text x="1091.5" y="595.7" font-size="13" text-anchor="middle" fill="#000" >Buyers:450</text>
<rect x="1053.5" y="603.5" width="76" height="16" fill="#F4CABC" stroke="#000" stroke-width="1" />
<text x="1091.5" y="615.7" font-size="13" text-anchor="middle" fill="#000" >Sellers:469</text>
<rect x="1053.5" y="624.5" width="76" height="16" fill="#fff" stroke="#000" stroke-width="1" />
<text x="1091.5" y="636.7" font-size="13" text-anchor="middle" fill="#000"  letter-spacing="0.25">Delta:-2.07</text>
<rect x="1053.5" y="644.5" width="76" height="16" fill="#F4CABC" stroke="#000" stroke-width="1" />
<text x="1091.5" y="656.7" font-size="13" text-anchor="middle" fill="#000" >Buyers:48.</text>
<rect x="1053.5" y="664.5" width="76" height="16" fill="#F4CABC" stroke="#000" stroke-width="1" />
<text x="1091.5" y="676.7" font-size="13" text-anchor="middle" fill="#000" >Sellers:51.</text>
<rect x="1053.5" y="686.5" width="76" height="16" fill="#1E90FF" stroke="#000" stroke-width="1" />
<text x="1091.5" y="698.3" font-size="13" text-anchor="middle" fill="#000" >Vol:919</text>
<rect x="1.5" y="84.5" width="50" height="10" fill="#fff" stroke="#000" stroke-width="1" />
<rect x="52" y="84" width="1" height="11" fill="#1E90FF"/>
<text x="26.5" y="93.45" font-size="12" text-anchor="middle" fill="#000" >5</text>
<rect x="1.5" y="94.5" width="50" height="11" fill="#fff" stroke="#000" stroke-width="1" />
<rect x="52" y="94" width="1" height="12" fill="#1E90FF"/>
<text x="26.5" y="104.11" font-size="12" text-anchor="middle" fill="#000" >9</text>
<rect x="1.5" y="105.5" width="50" height="11" fill="#fff" stroke="#000" stroke-width="1" />
<rect x="52" y="105" width="1" height="12" fill="#1E90FF"/>
<text x="26.5" y="114.76" font-size="12" text-anchor="middle" fill="#000" >2</text>
<rect x="1.5" y="116.5" width="50" height="10" fill="#fff" stroke="#000" stroke-width="1" />
<rect x="52" y="116" width="1" height="11" fill="#1E90FF"/>
<text x="26.5" y="125.41" font-size="12" text-anchor="middle" fill="#000" >6</text>
<rect x="1.5" y="126.5" width="50" height="11" fill="#fff" stroke="#000" stroke-width="1" />
<rect x="52" y="126" width="1" height="12" fill="#1E90FF"/>
<text x="26.5" y="136.07" font-size="12" text-anchor="middle" fill="#000" >4</text>
<rect x="1.5" y="137.5" width="50" height="10" fill="#fff" stroke="#000" stroke-width="1" />
<rect x="52" y="137" width="1" height="11" fill="#1E90FF"/>
<text x="26.5" y="146.72" font-size="12" text-anchor="middle" fill="#000" >9</text>
<rect x="1.5" y="147.5" width="50" height="11" fill="#fff" stroke="#000" stroke-width="1" />
<rect x="50" y="148" width="2" height="10" fill="#1E90FF"/>
<text x="26.5" y="157.38" font-size="12" text-anchor="middle" fill="#000" >27</text>
<rect x="1.5" y="158.5" width="50" height="11" fill="#fff" stroke="#000" stroke-width="1" />
<rect x="49" y="159" width="3" height="10" fill="#1E90FF"/>
<text x="26.5" y="168.03" font-size="12" text-anchor="middle" fill="#000" >46</text>
<rect x="1.5" y="169.5" width="50" height="10" fill="#fff" stroke="#000" stroke-width="1" />
<rect x="48" y="170" width="4" height="9" fill="#1E90FF"/>
<text x="26.5" y="178.69" font-size="12" text-anchor="middle" fill="#000" >63</text>
<rect x="1.5" y="179.5" width="50" height="11" fill="#fff" stroke="#000" stroke-width="1" />
<rect x="50" y="180" width="2" height="10" fill="#1E90FF"/>
<text x="26.5" y="189.34" font-size="12" text-anchor="middle" fill="#000" >41</text>
<rect x="1.5" y="190.5" width="50" height="11" fill="#fff" stroke="#000" stroke-width="1" />
<rect x="49" y="191" width="3" height="10" fill="#1E90FF"/>
<text x="26.5" y="200.0" font-size="12" text-anchor="middle" fill="#000" >52</text>
<rect x="1.5" y="201.5" width="50" height="10" fill="#fff" stroke="#000" stroke-width="1" />
<rect x="48" y="202" width="4" height="9" fill="#1E90FF"/>
<text x="26.5" y="210.66" font-size="12" text-anchor="middle" fill="#000" >63</text>
<rect x="1.5" y="211.5" width="50" height="11" fill="#fff" stroke="#000" stroke-width="1" />
<rect x="49" y="212" width="3" height="10" fill="#1E90FF"/>
<text x="26.5" y="221.31" font-size="12" text-anchor="middle" fill="#000" >54</text>
<rect x="1.5" y="222.5" width="50" height="11" fill="#fff" stroke="#000" stroke-width="1" />
<rect x="50" y="223" width="2" height="10" fill="#1E90FF"/>
<text x="26.5" y="231.97" font-size="12" text-anchor="middle" fill="#000" >36</text>
<rect x="1.5" y="233.5" width="50" height="10" fill="#fff" stroke="#000" stroke-width="1" />
<rect x="47" y="234" width="5" height="9" fill="#1E90FF"/>
<text x="26.5" y="242.62" font-size="12" text-anchor="middle" fill="#000" >88</text>
<rect x="1.5" y="243.5" width="50" height="11" fill="#fff" stroke="#000" stroke-width="1" />
<rect x="50" y="244" width="2" height="10" fill="#1E90FF"/>
<text x="26.5" y="253.28" font-size="12" text-anchor="middle" fill="#000" >37</text>
<rect x="1.5" y="254.5" width="50" height="11" fill="#fff" stroke="#000" stroke-width="1" />
<rect x="47" y="255" width="5" height="10" fill="#1E90FF"/>
<text x="26.5" y="263.93" font-size="12" text-anchor="middle" fill="#000" >84</text>
<rect x="1.5" y="265.5" width="50" height="10" fill="#fff" stroke="#000" stroke-width="1" />
<rect x="47" y="266" width="5" height="9" fill="#1E90FF"/>
<text x="26.5" y="274.58" font-size="12" text-anchor="middle" fill="#000" >89</text>
<rect x="1.5" y="275.5" width="50" height="11" fill="#fff" stroke="#000" stroke-width="1" />
<rect x="49" y="276" width="3" height="10" fill="#1E90FF"/>
<text x="26.5" y="285.24" font-size="12" text-anchor="middle" fill="#000" >50</text>
<rect x="1.5" y="286.5" width="50" height="11" fill="#fff" stroke="#000" stroke-width="1" />
<rect x="47" y="287" width="5" height="10" fill="#1E90FF"/>
<text x="26.5" y="295.89" font-size="12" text-anchor="middle" fill="#000" >93</text>
<rect x="1.5" y="297.5" width="50" height="10" fill="#fff" stroke="#000" stroke-width="1" />
<rect x="49" y="298" width="3" height="9" fill="#1E90FF"/>
<text x="26.5" y="306.55" font-size="12" text-anchor="middle" fill="#000" >44</text>
<rect x="1.5" y="307.5" width="50" height="11" fill="#fff" stroke="#000" stroke-width="1" />
<rect x="49" y="308" width="3" height="10" fill="#1E90FF"/>
<text x="26.5" y="317.2" font-size="12" text-anchor="middle" fill="#000" >54</text>
<rect x="1.5" y="318.5" width="50" height="11" fill="#fff" stroke="#000" stroke-width="1" />
<rect x="47" y="319" width="5" height="10" fill="#1E90FF"/>
<text x="26.5" y="327.86" font-size="12" text-anchor="middle" fill="#000" >92</text>
<rect x="1.5" y="329.5" width="50" height="10" fill="#fff" stroke="#000" stroke-width="1" />
<rect x="42" y="330" width="10" height="9" fill="#1E90FF"/>
<text x="26.5" y="338.51" font-size="12" text-anchor="middle" fill="#000" >169</text>
<rect x="1.5" y="339.5" width="50" height="11" fill="#fff" stroke="#000" stroke-width="1" />
<rect x="44" y="340" width="8" height="10" fill="#1E90FF"/>
<text x="26.5" y="349.17" font-size="12" text-anchor="middle" fill="#000" >133</text>
<rect x="1.5" y="350.5" width="50" height="11" fill="#fff" stroke="#000" stroke-width="1" />
<rect x="47" y="351" width="5" height="10" fill="#1E90FF"/>
<text x="26.5" y="359.82" font-size="12" text-anchor="middle" fill="#000" >93</text>
<rect x="1.5" y="361.5" width="50" height="10" fill="#fff" stroke="#000" stroke-width="1" />
<rect x="43" y="362" width="9" height="9" fill="#1E90FF"/>
<text x="26.5" y="370.48" font-size="12" text-anchor="middle" fill="#000" >150</text>
<rect x="1.5" y="371.5" width="50" height="11" fill="#fff" stroke="#000" stroke-width="1" />
<rect x="42" y="372" width="10" height="10" fill="#1E90FF"/>
<text x="26.5" y="381.13" font-size="12" text-anchor="middle" fill="#000" >181</text>
<rect x="1.5" y="382.5" width="50" height="11" fill="#fff" stroke="#000" stroke-width="1" />
<rect x="46" y="383" width="6" height="10" fill="#1E90FF"/>
<text x="26.5" y="391.79" font-size="12" text-anchor="middle" fill="#000" >107</text>
<rect x="1.5" y="393.5" width="50" height="10" fill="#fff" stroke="#000" stroke-width="1" />
<rect x="46" y="394" width="6" height="9" fill="#1E90FF"/>
<text x="26.5" y="402.44" font-size="12" text-anchor="middle" fill="#000" >107</text>
<rect x="1.5" y="403.5" width="50" height="11" fill="#fff" stroke="#000" stroke-width="1" />
<rect x="48" y="404" width="4" height="10" fill="#1E90FF"/>
<text x="26.5" y="413.1" font-size="12" text-anchor="middle" fill="#000" >62</text>
<rect x="1.5" y="414.5" width="50" height="11" fill="#fff" stroke="#000" stroke-width="1" />
<rect x="48" y="415" width="4" height="10" fill="#1E90FF"/>
<text x="26.5" y="423.75" font-size="12" text-anchor="middle" fill="#000" >76</text>
<rect x="1.5" y="425.5" width="50" height="10" fill="#fff" stroke="#000" stroke-width="1" />
<rect x="50" y="426" width="2" height="9" fill="#1E90FF"/>
<text x="26.5" y="434.41" font-size="12" text-anchor="middle" fill="#000" >32</text>
<rect x="1.5" y="435.5" width="50" height="11" fill="#fff" stroke="#000" stroke-width="1" />
<rect x="52" y="435" width="1" height="12" fill="#1E90FF"/>
<text x="26.5" y="445.06" font-size="12" text-anchor="middle" fill="#000" >12</text>
<rect x="1.5" y="446.5" width="50" height="10" fill="#fff" stroke="#000" stroke-width="1" />
<rect x="52" y="446" width="1" height="11" fill="#1E90FF"/>
<text x="26.5" y="455.72" font-size="12" text-anchor="middle" fill="#000" >14</text>
<rect x="1.5" y="456.5" width="50" height="11" fill="#fff" stroke="#000" stroke-width="1" />
<rect x="52" y="456" width="1" height="12" fill="#1E90FF"/>
<text x="26.5" y="466.37" font-size="12" text-anchor="middle" fill="#000" >11</text>
<rect x="1.5" y="467.5" width="50" height="11" fill="#fff" stroke="#000" stroke-width="1" />
<rect x="52" y="467" width="1" height="12" fill="#1E90FF"/>
<text x="26.5" y="477.03" font-size="12" text-anchor="middle" fill="#000" >10</text>
<rect x="1.5" y="478.5" width="50" height="10" fill="#fff" stroke="#000" stroke-width="1" />
<rect x="52" y="478" width="1" height="11" fill="#1E90FF"/>
<text x="26.5" y="487.68" font-size="12" text-anchor="middle" fill="#000" >6</text>
<rect x="1.5" y="488.5" width="50" height="11" fill="#fff" stroke="#000" stroke-width="1" />
<rect x="52" y="488" width="1" height="12" fill="#1E90FF"/>
<text x="26.5" y="498.34" font-size="12" text-anchor="middle" fill="#000" >4</text>
<rect x="1.5" y="499.5" width="50" height="11" fill="#fff" stroke="#000" stroke-width="1" />
<rect x="49" y="500" width="3" height="10" fill="#1E90FF"/>
<text x="26.5" y="508.99" font-size="12" text-anchor="middle" fill="#000" >55</text>
<rect x="1.5" y="510.5" width="50" height="10" fill="#fff" stroke="#000" stroke-width="1" />
<rect x="49" y="511" width="3" height="9" fill="#1E90FF"/>
<text x="26.5" y="519.65" font-size="12" text-anchor="middle" fill="#000" >54</text>
<rect x="1.5" y="520.5" width="50" height="11" fill="#fff" stroke="#000" stroke-width="1" />
<rect x="47" y="521" width="5" height="10" fill="#1E90FF"/>
<text x="26.5" y="530.3" font-size="12" text-anchor="middle" fill="#000" >95</text>
<rect x="1.5" y="531.5" width="50" height="11" fill="#fff" stroke="#000" stroke-width="1" />
<rect x="45" y="532" width="7" height="10" fill="#1E90FF"/>
<text x="26.5" y="540.96" font-size="12" text-anchor="middle" fill="#000" >115</text>
<rect x="1.5" y="542.5" width="50" height="10" fill="#fff" stroke="#000" stroke-width="1" />
<rect x="44" y="543" width="8" height="9" fill="#1E90FF"/>
<text x="26.5" y="551.61" font-size="12" text-anchor="middle" fill="#000" >137</text>
<rect x="1.5" y="552.5" width="50" height="11" fill="#fff" stroke="#000" stroke-width="1" />
<rect x="47" y="553" width="5" height="10" fill="#1E90FF"/>
<text x="26.5" y="562.27" font-size="12" text-anchor="middle" fill="#000" >83</text>
<rect x="1.5" y="563.5" width="50" height="11" fill="#fff" stroke="#000" stroke-width="1" />
<rect x="47" y="564" width="5" height="10" fill="#1E90FF"/>
<text x="26.5" y="572.92" font-size="12" text-anchor="middle" fill="#000" >86</text>
<rect x="1.5" y="574.5" width="50" height="10" fill="#fff" stroke="#000" stroke-width="1" />
<rect x="47" y="575" width="5" height="9" fill="#1E90FF"/>
<text x="26.5" y="583.58" font-size="12" text-anchor="middle" fill="#000" >82</text>
<rect x="1.5" y="584.5" width="50" height="11" fill="#fff" stroke="#000" stroke-width="1" />
<rect x="45" y="585" width="7" height="10" fill="#1E90FF"/>
<text x="26.5" y="594.23" font-size="12" text-anchor="middle" fill="#000" >117</text>
<rect x="1.5" y="595.5" width="50" height="11" fill="#fff" stroke="#000" stroke-width="1" />
<rect x="46" y="596" width="6" height="10" fill="#1E90FF"/>
<text x="26.5" y="604.89" font-size="12" text-anchor="middle" fill="#000" >113</text>
<rect x="1.5" y="606.5" width="50" height="10" fill="#fff" stroke="#000" stroke-width="1" />
<rect x="43" y="607" width="9" height="9" fill="#1E90FF"/>
<text x="26.5" y="615.54" font-size="12" text-anchor="middle" fill="#000" >164</text>
<rect x="1.5" y="616.5" width="50" height="11" fill="#fff" stroke="#000" stroke-width="1" />
<rect x="42" y="617" width="10" height="10" fill="#1E90FF"/>
<text x="26.5" y="626.2" font-size="12" text-anchor="middle" fill="#000" >176</text>
<rect x="1.5" y="627.5" width="50" height="11" fill="#fff" stroke="#000" stroke-width="1" />
<rect x="38" y="628" width="14" height="10" fill="#1E90FF"/>
<text x="26.5" y="636.85" font-size="12" text-anchor="middle" fill="#000" >245</text>
<rect x="1.5" y="638.5" width="50" height="10" fill="#fff" stroke="#000" stroke-width="1" />
<rect x="43" y="639" width="9" height="9" fill="#1E90FF"/>
<text x="26.5" y="647.51" font-size="12" text-anchor="middle" fill="#000" >158</text>
<rect x="1.5" y="648.5" width="50" height="11" fill="#fff" stroke="#000" stroke-width="1" />
<rect x="39" y="649" width="13" height="10" fill="#1E90FF"/>
<text x="26.5" y="658.16" font-size="12" text-anchor="middle" fill="#000" >223</text>
<rect x="1.5" y="659.5" width="50" height="11" fill="#fff" stroke="#000" stroke-width="1" />
<rect x="41" y="660" width="11" height="10" fill="#1E90FF"/>
<text x="26.5" y="668.82" font-size="12" text-anchor="middle" fill="#000" >201</text>
<rect x="1.5" y="670.5" width="50" height="10" fill="#fff" stroke="#000" stroke-width="1" />
<rect x="41" y="671" width="11" height="9" fill="#1E90FF"/>
<text x="26.5" y="679.47" font-size="12" text-anchor="middle" fill="#000" >187</text>
<rect x="1.5" y="680.5" width="50" height="11" fill="#fff" stroke="#000" stroke-width="1" />
<rect x="40" y="681" width="12" height="10" fill="#1E90FF"/>
<text x="26.5" y="690.13" font-size="12" text-anchor="middle" fill="#000" >214</text>
<rect x="1.5" y="691.5" width="50" height="11" fill="#fff" stroke="#000" stroke-width="1" />
<rect x="39" y="692" width="13" height="10" fill="#1E90FF"/>
<text x="26.5" y="700.78" font-size="12" text-anchor="middle" fill="#000" >233</text>
<rect x="1131.5" y="84.5" width="40" height="10" fill="#FDF4F1" stroke="#000" stroke-width="1" />
<text x="1151.5" y="93.45" font-size="12" text-anchor="middle" fill="#000" >-149</text>
<rect x="1131.5" y="94.5" width="40" height="11" fill="#FDF4F1" stroke="#000" stroke-width="1" />
<text x="1151.5" y="104.11" font-size="12" text-anchor="middle" fill="#000" >-144</text>
<rect x="1131.5" y="105.5" width="40" height="11" fill="#FDF5F2" stroke="#000" stroke-width="1" />
<text x="1151.5" y="114.76" font-size="12" text-anchor="middle" fill="#000" >-135</text>
<rect x="1131.5" y="116.5" width="40" height="10" fill="#FDF5F2" stroke="#000" stroke-width="1" />
<text x="1151.5" y="125.41" font-size="12" text-anchor="middle" fill="#000" >-133</text>
<rect x="1131.5" y="126.5" width="40" height="11" fill="#FDF5F3" stroke="#000" stroke-width="1" />
<text x="1151.5" y="136.07" font-size="12" text-anchor="middle" fill="#000" >-127</text>
<rect x="1131.5" y="137.5" width="40" height="10" fill="#FCF3EF" stroke="#000" stroke-width="1" />
<text x="1151.5" y="146.72" font-size="12" text-anchor="middle" fill="#000" >-166</text>
<rect x="1131.5" y="147.5" width="40" height="11" fill="#FDF5F2" stroke="#000" stroke-width="1" />
<text x="1151.5" y="157.38" font-size="12" text-anchor="middle" fill="#000" >-136</text>
<rect x="1131.5" y="158.5" width="40" height="11" fill="#FDF5F2" stroke="#000" stroke-width="1" />
<text x="1151.5" y="168.03" font-size="12" text-anchor="middle" fill="#000" >-137</text>
<rect x="1131.5" y="169.5" width="40" height="10" fill="#FDF5F3" stroke="#000" stroke-width="1" />
<text x="1151.5" y="178.69" font-size="12" text-anchor="middle" fill="#000" >-131</text>
<rect x="1131.5" y="179.5" width="40" height="11" fill="#FDF5F3" stroke="#000" stroke-width="1" />
<text x="1151.5" y="189.34" font-size="12" text-anchor="middle" fill="#000" >-128</text>
<rect x="1131.5" y="190.5" width="40" height="11" fill="#FDF6F4" stroke="#000" stroke-width="1" />
<text x="1151.5" y="200.0" font-size="12" text-anchor="middle" fill="#000" >-116</text>
<rect x="1131.5" y="201.5" width="40" height="10" fill="#FDF7F5" stroke="#000" stroke-width="1" />
<text x="1151.5" y="210.66" font-size="12" text-anchor="middle" fill="#000" >-108</text>
<rect x="1131.5" y="211.5" width="40" height="11" fill="#FDF8F6" stroke="#000" stroke-width="1" />
<text x="1151.5" y="221.31" font-size="12" text-anchor="middle" fill="#000" >-97</text>
<rect x="1131.5" y="222.5" width="40" height="11" fill="#FEF8F7" stroke="#000" stroke-width="1" />
<text x="1151.5" y="231.97" font-size="12" text-anchor="middle" fill="#000" >-89</text>
<rect x="1131.5" y="233.5" width="40" height="10" fill="#FEFAF9" stroke="#000" stroke-width="1" />
<text x="1151.5" y="242.62" font-size="12" text-anchor="middle" fill="#000" >-60</text>
<rect x="1131.5" y="243.5" width="40" height="11" fill="#FEFBFA" stroke="#000" stroke-width="1" />
<text x="1151.5" y="253.28" font-size="12" text-anchor="middle" fill="#000" >-55</text>
<rect x="1131.5" y="254.5" width="40" height="11" fill="#FEFBFA" stroke="#000" stroke-width="1" />
<text x="1151.5" y="263.93" font-size="12" text-anchor="middle" fill="#000" >-55</text>
<rect x="1131.5" y="265.5" width="40" height="10" fill="#FEFBFA" stroke="#000" stroke-width="1" />
<text x="1151.5" y="274.58" font-size="12" text-anchor="middle" fill="#000" >-51</text>
<rect x="1131.5" y="275.5" width="40" height="11" fill="#FEFBFA" stroke="#000" stroke-width="1" />
<text x="1151.5" y="285.24" font-size="12" text-anchor="middle" fill="#000" >-55</text>
<rect x="1131.5" y="286.5" width="40" height="11" fill="#FEFBF9" stroke="#000" stroke-width="1" />
<text x="1151.5" y="295.89" font-size="12" text-anchor="middle" fill="#000" >-59</text>
<rect x="1131.5" y="297.5" width="40" height="10" fill="#FEFBFA" stroke="#000" stroke-width="1" />
<text x="1151.5" y="306.55" font-size="12" text-anchor="middle" fill="#000" >-50</text>
<rect x="1131.5" y="307.5" width="40" height="11" fill="#FEFCFC" stroke="#000" stroke-width="1" />
<text x="1151.5" y="317.2" font-size="12" text-anchor="middle" fill="#000" >-35</text>
<rect x="1131.5" y="318.5" width="40" height="11" fill="#FEFDFC" stroke="#000" stroke-width="1" />
<text x="1151.5" y="327.86" font-size="12" text-anchor="middle" fill="#000" >-33</text>
<rect x="1131.5" y="329.5" width="40" height="10" fill="#FEFCFC" stroke="#000" stroke-width="1" />
<text x="1151.5" y="338.51" font-size="12" text-anchor="middle" fill="#000" >-34</text>
<rect x="1131.5" y="339.5" width="40" height="11" fill="#FEFDFC" stroke="#000" stroke-width="1" />
<text x="1151.5" y="349.17" font-size="12" text-anchor="middle" fill="#000" >-33</text>
<rect x="1131.5" y="350.5" width="40" height="11" fill="#FFFDFC" stroke="#000" stroke-width="1" />
<text x="1151.5" y="359.82" font-size="12" text-anchor="middle" fill="#000" >-28</text>
<rect x="1131.5" y="361.5" width="40" height="10" fill="#FFFEFD" stroke="#000" stroke-width="1" />
<text x="1151.5" y="370.48" font-size="12" text-anchor="middle" fill="#000" >-20</text>
<rect x="1131.5" y="371.5" width="40" height="11" fill="#FFFEFD" stroke="#000" stroke-width="1" />
<text x="1151.5" y="381.13" font-size="12" text-anchor="middle" fill="#000" >-16</text>
<rect x="1131.5" y="382.5" width="40" height="11" fill="#FFFEFD" stroke="#000" stroke-width="1" />
<text x="1151.5" y="391.79" font-size="12" text-anchor="middle" fill="#000" >-16</text>
<rect x="1131.5" y="393.5" width="40" height="10" fill="#FFFEFE" stroke="#000" stroke-width="1" />
<text x="1151.5" y="402.44" font-size="12" text-anchor="middle" fill="#000" >-9</text>
<rect x="1131.5" y="403.5" width="40" height="11" fill="#FFFEFE" stroke="#000" stroke-width="1" />
<text x="1151.5" y="413.1" font-size="12" text-anchor="middle" fill="#000" >-10</text>
<rect x="1131.5" y="414.5" width="40" height="11" fill="#FFFEFE" stroke="#000" stroke-width="1" />
<text x="1151.5" y="423.75" font-size="12" text-anchor="middle" fill="#000" >-8</text>
<rect x="1131.5" y="425.5" width="40" height="10" fill="#FFFEFE" stroke="#000" stroke-width="1" />
<text x="1151.5" y="434.41" font-size="12" text-anchor="middle" fill="#000" >-7</text>
<rect x="1131.5" y="435.5" width="40" height="11" fill="#FFFFFF" stroke="#000" stroke-width="1" />
<text x="1151.5" y="445.06" font-size="12" text-anchor="middle" fill="#000" >-5</text>
<rect x="1131.5" y="446.5" width="40" height="10" fill="#FFFFFF" stroke="#000" stroke-width="1" />
<text x="1151.5" y="455.72" font-size="12" text-anchor="middle" fill="#000" >0</text>
<rect x="1131.5" y="456.5" width="40" height="11" fill="#FAFFF2" stroke="#000" stroke-width="1" />
<text x="1151.5" y="466.37" font-size="12" text-anchor="middle" fill="#000" >122</text>
<rect x="1131.5" y="467.5" width="40" height="11" fill="#F5FFE5" stroke="#000" stroke-width="1" />
<text x="1151.5" y="477.03" font-size="12" text-anchor="middle" fill="#000" >253</text>
<rect x="1131.5" y="478.5" width="40" height="10" fill="#F4FFE4" stroke="#000" stroke-width="1" />
<text x="1151.5" y="487.68" font-size="12" text-anchor="middle" fill="#000" >263</text>
<rect x="1131.5" y="488.5" width="40" height="11" fill="#F4FFE3" stroke="#000" stroke-width="1" />
<text x="1151.5" y="498.34" font-size="12" text-anchor="middle" fill="#000" >269</text>
<rect x="1131.5" y="499.5" width="40" height="11" fill="#F4FFE3" stroke="#000" stroke-width="1" />
<text x="1151.5" y="508.99" font-size="12" text-anchor="middle" fill="#000" >273</text>
<rect x="1131.5" y="510.5" width="40" height="10" fill="#F3FFE2" stroke="#000" stroke-width="1" />
<text x="1151.5" y="519.65" font-size="12" text-anchor="middle" fill="#000" >283</text>
<rect x="1131.5" y="520.5" width="40" height="11" fill="#F3FFE0" stroke="#000" stroke-width="1" />
<text x="1151.5" y="530.3" font-size="12" text-anchor="middle" fill="#000" >295</text>
<rect x="1131.5" y="531.5" width="40" height="11" fill="#F3FFE0" stroke="#000" stroke-width="1" />
<text x="1151.5" y="540.96" font-size="12" text-anchor="middle" fill="#000" >300</text>
<rect x="1131.5" y="542.5" width="40" height="10" fill="#F3FFDF" stroke="#000" stroke-width="1" />
<text x="1151.5" y="551.61" font-size="12" text-anchor="middle" fill="#000" >304</text>
<rect x="1131.5" y="552.5" width="40" height="11" fill="#F2FFDF" stroke="#000" stroke-width="1" />
<text x="1151.5" y="562.27" font-size="12" text-anchor="middle" fill="#000" >305</text>
<rect x="1131.5" y="563.5" width="40" height="11" fill="#F1FFDA" stroke="#000" stroke-width="1" />
<text x="1151.5" y="572.92" font-size="12" text-anchor="middle" fill="#000" >351</text>
<rect x="1131.5" y="574.5" width="40" height="10" fill="#F0FFDA" stroke="#000" stroke-width="1" />
<text x="1151.5" y="583.58" font-size="12" text-anchor="middle" fill="#000" >357</text>
<rect x="1131.5" y="584.5" width="40" height="11" fill="#F0FFDA" stroke="#000" stroke-width="1" />
<text x="1151.5" y="594.23" font-size="12" text-anchor="middle" fill="#000" >359</text>
<rect x="1131.5" y="595.5" width="40" height="11" fill="#F0FFD9" stroke="#000" stroke-width="1" />
<text x="1151.5" y="604.89" font-size="12" text-anchor="middle" fill="#000" >365</text>
<rect x="1131.5" y="606.5" width="40" height="10" fill="#EFFFD7" stroke="#000" stroke-width="1" />
<text x="1151.5" y="615.54" font-size="12" text-anchor="middle" fill="#000" >382</text>
<rect x="1131.5" y="616.5" width="40" height="11" fill="#EEFFD4" stroke="#000" stroke-width="1" />
<text x="1151.5" y="626.2" font-size="12" text-anchor="middle" fill="#000" >409</text>
<rect x="1131.5" y="627.5" width="40" height="11" fill="#EEFFD3" stroke="#000" stroke-width="1" />
<text x="1151.5" y="636.85" font-size="12" text-anchor="middle" fill="#000" >421</text>
<rect x="1131.5" y="638.5" width="40" height="10" fill="#EDFFD1" stroke="#000" stroke-width="1" />
<text x="1151.5" y="647.51" font-size="12" text-anchor="middle" fill="#000" >439</text>
<rect x="1131.5" y="648.5" width="40" height="11" fill="#EDFFD2" stroke="#000" stroke-width="1" />
<text x="1151.5" y="658.16" font-size="12" text-anchor="middle" fill="#000" >434</text>
<rect x="1131.5" y="659.5" width="40" height="11" fill="#EDFFD2" stroke="#000" stroke-width="1" />
<text x="1151.5" y="668.82" font-size="12" text-anchor="middle" fill="#000" >435</text>
<rect x="1131.5" y="670.5" width="40" height="10" fill="#EDFFD1" stroke="#000" stroke-width="1" />
<text x="1151.5" y="679.47" font-size="12" text-anchor="middle" fill="#000" >441</text>
<rect x="1131.5" y="680.5" width="40" height="11" fill="#EDFFD1" stroke="#000" stroke-width="1" />
<text x="1151.5" y="690.13" font-size="12" text-anchor="middle" fill="#000" >442</text>
<rect x="1131.5" y="691.5" width="40" height="11" fill="#EDFFD1" stroke="#000" stroke-width="1" />
<text x="1151.5" y="700.78" font-size="12" text-anchor="middle" fill="#000" >439</text>
<clipPath id="cpinfo"><rect x="0" y="658" width="203" height="39"/></clipPath>
<rect x="0" y="658" width="203" height="39" fill="#fff"/>
<g clip-path="url(#cpinfo)">
<text x="10" y="681" font-size="11" text-anchor="start" fill="#000" id="rec1" letter-spacing="0.1">Recording Binary KO - Price Aggreg : 1</text>
<text x="10" y="693" font-size="11" text-anchor="start" fill="#000" id="rec2" letter-spacing="0.05">Trade Volume Range: 1 to 10000</text>
</g>
<rect x="0" y="707" width="1280" height="1" fill="#000"/>
<text x="3" y="713" font-size="11" text-anchor="start" fill="#000" id="copy">© 2013 NinjaTrader, LLC</text>
<rect x="0" y="715" width="1227" height="1" fill="#000"/>
<rect x="1226" y="56" width="1" height="660" fill="#000"/>
<rect x="47" y="716" width="1" height="6" fill="#000"/>
<text x="47" y="732" font-size="11" text-anchor="middle" fill="#000" >09:00</text>
<rect x="49" y="713" width="5" height="1" fill="#00E5EE"/>
<rect x="127" y="716" width="1" height="6" fill="#000"/>
<text x="127" y="732" font-size="11" text-anchor="middle" fill="#000" >09:02</text>
<rect x="129" y="713" width="5" height="1" fill="#00E5EE"/>
<rect x="207" y="716" width="1" height="6" fill="#000"/>
<text x="207" y="732" font-size="11" text-anchor="middle" fill="#000" >09:08</text>
<rect x="209" y="713" width="5" height="1" fill="#00E5EE"/>
<rect x="287" y="716" width="1" height="6" fill="#000"/>
<text x="287" y="732" font-size="11" text-anchor="middle" fill="#000" >09:12</text>
<rect x="289" y="713" width="5" height="1" fill="#00E5EE"/>
<rect x="367" y="716" width="1" height="6" fill="#000"/>
<text x="367" y="732" font-size="11" text-anchor="middle" fill="#000" >09:18</text>
<rect x="369" y="713" width="5" height="1" fill="#00E5EE"/>
<rect x="447" y="716" width="1" height="6" fill="#000"/>
<text x="447" y="732" font-size="11" text-anchor="middle" fill="#000" >09:22</text>
<rect x="449" y="713" width="5" height="1" fill="#00E5EE"/>
<rect x="527" y="716" width="1" height="6" fill="#000"/>
<text x="527" y="732" font-size="11" text-anchor="middle" fill="#000" >09:26</text>
<rect x="529" y="713" width="5" height="1" fill="#00E5EE"/>
<rect x="607" y="716" width="1" height="6" fill="#000"/>
<text x="607" y="732" font-size="11" text-anchor="middle" fill="#000" >09:49</text>
<rect x="609" y="713" width="5" height="1" fill="#00E5EE"/>
<rect x="687" y="716" width="1" height="6" fill="#000"/>
<text x="687" y="732" font-size="11" text-anchor="middle" fill="#000" >10:00</text>
<rect x="689" y="713" width="5" height="1" fill="#00E5EE"/>
<rect x="767" y="716" width="1" height="6" fill="#000"/>
<text x="767" y="732" font-size="11" text-anchor="middle" fill="#000" >10:01</text>
<rect x="769" y="713" width="5" height="1" fill="#00E5EE"/>
<rect x="847" y="716" width="1" height="6" fill="#000"/>
<text x="847" y="732" font-size="11" text-anchor="middle" fill="#000" >10:03</text>
<rect x="849" y="713" width="5" height="1" fill="#00E5EE"/>
<rect x="927" y="716" width="1" height="6" fill="#000"/>
<text x="927" y="732" font-size="11" text-anchor="middle" fill="#000" >10:04</text>
<rect x="929" y="713" width="5" height="1" fill="#00E5EE"/>
<rect x="1007" y="716" width="1" height="6" fill="#000"/>
<text x="1007" y="732" font-size="11" text-anchor="middle" fill="#000" >10:04</text>
<rect x="1009" y="713" width="5" height="1" fill="#00E5EE"/>
<rect x="1087" y="716" width="1" height="6" fill="#000"/>
<text x="1087" y="732" font-size="11" text-anchor="middle" fill="#000" >10:09</text>
<rect x="1089" y="713" width="5" height="1" fill="#00E5EE"/>
<rect x="1227" y="78" width="6" height="1" fill="#000"/>
<text x="1234" y="82" font-size="11" text-anchor="start" fill="#000" >9170.0</text>
<rect x="1227" y="121" width="6" height="1" fill="#000"/>
<text x="1234" y="125" font-size="11" text-anchor="start" fill="#000" >9168.0</text>
<rect x="1227" y="163" width="6" height="1" fill="#000"/>
<text x="1234" y="167" font-size="11" text-anchor="start" fill="#000" >9166.0</text>
<rect x="1227" y="206" width="6" height="1" fill="#000"/>
<text x="1234" y="210" font-size="11" text-anchor="start" fill="#000" >9164.0</text>
<rect x="1227" y="249" width="6" height="1" fill="#000"/>
<text x="1234" y="253" font-size="11" text-anchor="start" fill="#000" >9162.0</text>
<rect x="1227" y="291" width="6" height="1" fill="#000"/>
<text x="1234" y="295" font-size="11" text-anchor="start" fill="#000" >9160.0</text>
<rect x="1227" y="334" width="6" height="1" fill="#000"/>
<text x="1234" y="338" font-size="11" text-anchor="start" fill="#000" >9158.0</text>
<rect x="1227" y="376" width="6" height="1" fill="#000"/>
<text x="1234" y="380" font-size="11" text-anchor="start" fill="#000" >9156.0</text>
<rect x="1227" y="419" width="6" height="1" fill="#000"/>
<text x="1234" y="423" font-size="11" text-anchor="start" fill="#000" >9154.0</text>
<rect x="1227" y="462" width="6" height="1" fill="#000"/>
<text x="1234" y="466" font-size="11" text-anchor="start" fill="#000" >9152.0</text>
<rect x="1227" y="504" width="6" height="1" fill="#000"/>
<text x="1234" y="508" font-size="11" text-anchor="start" fill="#000" >9150.0</text>
<rect x="1227" y="547" width="6" height="1" fill="#000"/>
<text x="1234" y="551" font-size="11" text-anchor="start" fill="#000" >9148.0</text>
<rect x="1227" y="590" width="6" height="1" fill="#000"/>
<text x="1234" y="594" font-size="11" text-anchor="start" fill="#000" >9146.0</text>
<rect x="1227" y="632" width="6" height="1" fill="#000"/>
<text x="1234" y="636" font-size="11" text-anchor="start" fill="#000" >9144.0</text>
<rect x="1227" y="675" width="6" height="1" fill="#000"/>
<text x="1234" y="679" font-size="11" text-anchor="start" fill="#000" >9142.0</text>
<polygon points="1227.5,449.5 1233.5,443.5 1269.5,443.5 1269.5,456.5 1233.5,456.5" fill="#D0D0D0" stroke="#000" stroke-width="1" shape-rendering="auto"/>
<text x="1235" y="454" font-size="11" text-anchor="start" fill="#000" >9152.5</text>
<polygon points="1227.5,711.5 1233.5,705.5 1264.5,705.5 1264.5,718.5 1233.5,718.5" fill="#C8C8C8" stroke="#333" stroke-width="1" shape-rendering="auto"/>
<text x="1235.5" y="716" font-size="11" text-anchor="start" fill="#000" >10.39</text>
<rect x="1266.5" y="53.5" width="12" height="12" fill="#fff" stroke="#000" stroke-width="1" />
<text x="1272.5" y="63.8" font-size="11" text-anchor="middle" fill="#000" >F</text>
<g shape-rendering="auto"><polygon points="1196,61.5 1211.5,71.5 1196,81.5" fill="#000"/><rect x="1213.2" y="60.8" width="3.8" height="21" rx="1.2" fill="#000"/></g>
<text x="3" y="67" font-size="11" text-anchor="start" fill="#000" id="ind" letter-spacing="0.053">GomVolumeLadder,ZTB Dec11th(FDAX 12-13 (20 Range),True,BidAsk,Binary,OnePerDay,None,1)</text>
</svg>
<div id="title"><span class="t" id="ttxt">FDAX 12-13 (20 Range)  18/12/2013</span>
<svg style="position:absolute;left:3px;top:5px" width="14" height="14" viewBox="0 0 14 14"><rect x="0.5" y="0.5" width="13" height="13" fill="#ECECF6" stroke="#9A9AAA"/><path d="M1 4.500H13M1 8.500H13M1 11.500H13M4.500 1V13M8.500 1V13M11.500 1V13" stroke="#C4C4D8" stroke-width="1"/><path d="M1 11L4 8.500L6 4.500L8.500 7.500L12.500 6" stroke="#2A78D8" stroke-width="1.300" fill="none"/><path d="M1 5.500L4 3L6.500 5.500L9 4.500L12.500 1.500" stroke="#22A822" stroke-width="1.600" fill="none"/></svg>
<div class="wb" style="left:1182px;top:2px;width:21px;height:21px;background:#ECE9F0;border:2px solid #C2C2C8;border-radius:0"><span style="position:absolute;left:6px;top:2px;font-size:11px;color:#000">L</span></div>
<div class="wb" style="left:1212px;background:linear-gradient(#6E9FE6,#3C74D4 50%,#3163C0)"><div style="position:absolute;left:4px;top:11px;width:7px;height:3px;background:#fff"></div></div>
<div class="wb" style="left:1235px;background:linear-gradient(#6E9FE6,#3C74D4 50%,#3163C0)"><svg width="17" height="17" viewBox="0 0 17 17" style="position:absolute;left:0;top:0"><path d="M6.5 6.5V4.5H12.5V10.500H10.5" stroke="#fff" stroke-width="1.4" fill="none"/><rect x="4" y="7" width="6.500" height="5.500" fill="none" stroke="#fff" stroke-width="1.6"/></svg></div>
<div class="wb" style="left:1258px;background:linear-gradient(#E88A66,#D4512A 45%,#C4421C);border-color:#E8B8A8"><svg width="17" height="17" viewBox="0 0 17 17" style="position:absolute;left:0;top:0"><path d="M4 4L13 13M13 4L4 13" stroke="#fff" stroke-width="2.2"/></svg></div>
</div>
<div id="tb">
<div style="position:absolute;left:3px;top:4px;width:2px;height:16px;background:repeating-linear-gradient(#BEBEC8 0 2px,transparent 2px 4px)"></div>
<span class="x" id="tb1" style="left:19px;letter-spacing:-0.25px">FDAX 12-13</span><div class="arr" style="left:83px;top:11px"></div>
<span class="x" id="tb2" style="left:97px;letter-spacing:-0.28px">20 Range</span><div class="arr" style="left:148px;top:11px"></div>
</div>
<div class="sep" style="left:12px"></div><div class="sep" style="left:161px"></div><div class="sep" style="left:271px"></div><div class="sep" style="left:329px"></div>
<svg style="position:absolute;left:160px;top:26px" width="300" height="25" viewBox="160 26 300 25">
<!-- candles icon -->
<g><path d="M168.900 31V45M173.900 31V45M179 31V45" stroke="#111" stroke-width="1.400"/>
<rect x="167.400" y="32.500" width="3" height="11" rx="1.200" fill="#4FE02E" stroke="#2A8A18" stroke-width="0.800"/><rect x="172.400" y="32.500" width="3" height="11" rx="1.200" fill="#4FE02E" stroke="#2A8A18" stroke-width="0.800"/><rect x="177.500" y="32.500" width="3" height="11" rx="1.200" fill="#F04A3E" stroke="#9A2A20" stroke-width="0.800"/></g>
<polygon points="184,37 190,37 187,40" fill="#000"/>
<!-- pencil -->
<g><polygon points="197,45 198,41 207,32 210,35 201,44" fill="#F5D21E" stroke="#9A7A10" stroke-width="0.800"/><polygon points="207,32 208.500,30.500 211.500,33.500 210,35" fill="#E8584A"/><polygon points="197,45 198,41 201,44" fill="#8A6A40"/></g>
<polygon points="213,37 219,37 216,40" fill="#000"/>
<!-- zoom in -->
<g><line x1="226" y1="46" x2="230" y2="42" stroke="#444" stroke-width="2"/><circle cx="232.500" cy="39.500" r="4" fill="#8EC4EE" stroke="#9A9AA8" stroke-width="1.500"/><path d="M235 34.500H241M238 31.500V37.500" stroke="#18A018" stroke-width="2"/></g>
<!-- zoom out disabled -->
<g opacity="0.800"><line x1="249" y1="46" x2="253" y2="42" stroke="#999" stroke-width="2"/><circle cx="255.500" cy="39.500" r="4" fill="#D0D0D4" stroke="#B4B4BC" stroke-width="1.500"/><path d="M258 34H264" stroke="#B8B8C0" stroke-width="2"/></g>
<!-- pointer -->
<g><polygon points="277.500,32.500 285,34.200 282.800,36.300 289.600,43 288,44.600 281.200,37.900 279.200,40" fill="#fff" stroke="#222" stroke-width="0.900"/></g>
<polygon points="294,37 300,37 297,40" fill="#000"/>
<!-- zoom frame -->
<g><rect x="307.500" y="30.500" width="13" height="14" fill="#F4F4F8" stroke="#888"/><line x1="307" y1="46" x2="310.500" y2="42.500" stroke="#444" stroke-width="2"/><circle cx="313.500" cy="38.500" r="4" fill="#8EC4EE" stroke="#A8A8B4" stroke-width="1.300"/></g>
<!-- chart trader -->
<g><path d="M336 34.500H343L344.500 33L343 31.500H336Z" fill="#2FD21E" stroke="#2A8A18" stroke-width="0.600"/><path d="M336 41.500H343L344.500 40L343 38.500H336Z" fill="#E83A2E" stroke="#8A2018" stroke-width="0.600"/><path d="M337 37H351M338 45H351M345 34H351" stroke="#CCC" stroke-width="0.800"/><rect x="344.500" y="34.500" width="2.500" height="12" fill="#4FE02E" stroke="#2A7A18" stroke-width="0.700"/><rect x="348" y="42" width="2.500" height="5" fill="#E83A2E" stroke="#8A2018" stroke-width="0.600"/></g>
<!-- candle box -->
<g><rect x="358.500" y="30.500" width="15" height="15" fill="#E8E8EC" stroke="#888"/><path d="M359 34H373M359 38H373M359 42H373" stroke="#BBB" stroke-width="0.700"/><path d="M361.500 32V44M366 31V42M370.500 33V45" stroke="#222"/><rect x="360" y="35" width="3" height="7" fill="#3FD21E" stroke="#2A7A18" stroke-width="0.500"/><rect x="364.500" y="33" width="3" height="6" fill="#3FD21E" stroke="#2A7A18" stroke-width="0.500"/><rect x="369" y="36" width="3" height="7" fill="#E83A2E" stroke="#8A2018" stroke-width="0.500"/></g>
<!-- line chart -->
<g><rect x="381.500" y="30.500" width="15" height="15" fill="#D8D8DC" stroke="#909090"/><rect x="382" y="31" width="14" height="9" fill="#EDEDF0"/><path d="M383 38L385 35L387 36L390 33L392 34L395 37" stroke="#2A9A5A" fill="none" stroke-width="1"/><path d="M383 41L385 39L387 40L390 38L392 39L395 41" stroke="#E03A3A" fill="none" stroke-width="1"/></g>
<!-- dollar doc -->
<g><path d="M406.500 31.500H415L417.500 34V45.500H406.500Z" fill="#fff" stroke="#888"/><text x="412" y="43" font-size="11" font-weight="bold" fill="#1E8A1E" text-anchor="middle" font-family='"Liberation Sans", Arial, sans-serif'>$</text></g>
<!-- data box -->
<g><rect x="428.500" y="30.500" width="13" height="15" fill="#F4F6FA" stroke="#909098"/><rect x="430" y="32" width="10" height="2.500" fill="#5AA8E8"/><rect x="430" y="36" width="2.500" height="8" fill="#A060E8" stroke="#7040B0" stroke-width="0.500"/><path d="M434 37H440M434 40H440M434 43H440" stroke="#C8D4E8" stroke-width="1.200"/></g>
</svg>
<div id="sb"></div>
<div class="sbtn" style="left:1px"><svg width="14" height="20" viewBox="0 0 14 20"><path d="M9 6L5 10L9 14" stroke="#444" stroke-width="1.800" fill="none"/></svg></div>
<div class="sbtn" style="left:1264px"><svg width="14" height="20" viewBox="0 0 14 20"><path d="M5 6L9 10L5 14" stroke="#444" stroke-width="1.800" fill="none"/></svg></div>
<div id="thumb"><div style="position:absolute;left:78px;top:7px;width:8px;height:7px;background:repeating-linear-gradient(90deg,#7888A8 0 1px,transparent 1px 2px)"></div></div>
<div id="bot"></div>
</body></html>
